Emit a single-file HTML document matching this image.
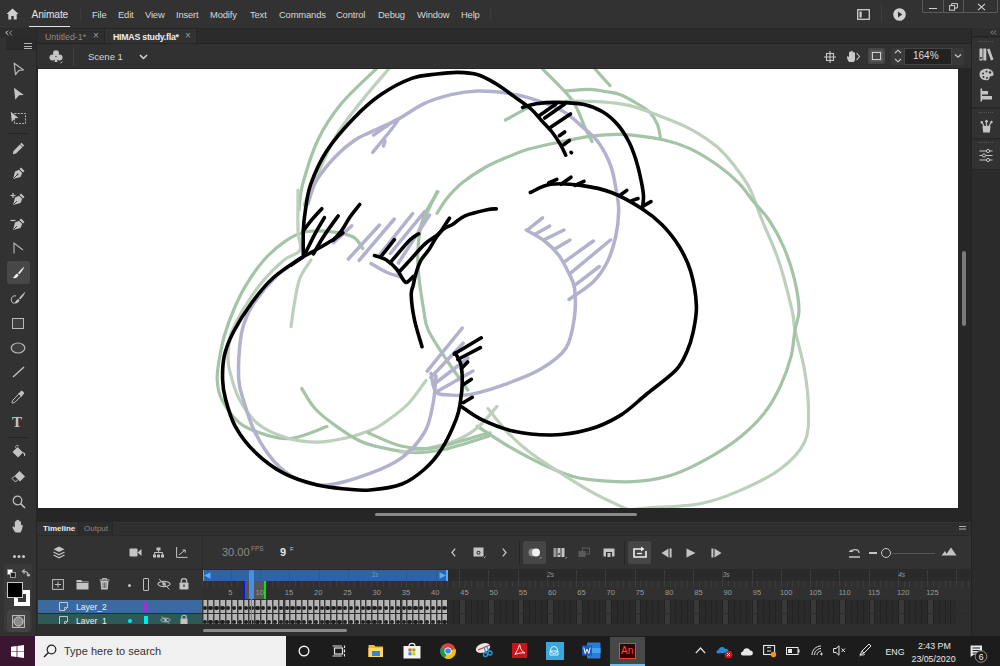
<!DOCTYPE html>
<html><head><meta charset="utf-8">
<style>
*{margin:0;padding:0;box-sizing:border-box}
html,body{width:1000px;height:666px;overflow:hidden;background:#323232;font-family:"Liberation Sans",sans-serif;}
.a{position:absolute}
svg{position:absolute;overflow:visible}
.mi{position:absolute;top:9px;font-size:9.4px;color:#d8d8d8;white-space:nowrap;letter-spacing:-0.15px}
</style></head><body>
<!-- MENUBAR -->
<div class="a" style="left:0;top:0;width:1000px;height:28px;background:#323232">
  <svg style="left:6px;top:8px" width="13" height="12" viewBox="0 0 13 12"><path d="M6.5 0.5 L0.5 6 H2.3 V11.5 H5.3 V8 H7.7 V11.5 H10.7 V6 H12.5 Z" fill="#cfcfcf"/></svg>
  <div class="mi" style="left:31.5px;top:9px;font-size:10.2px;color:#e4e4e4;letter-spacing:-0.1px">Animate</div>
  <div class="a" style="left:29px;top:25.5px;width:41px;height:1.5px;background:#e0e0e0"></div>
  <div class="a" style="left:80px;top:7px;width:1px;height:14px;background:#3c3c3c"></div>
  <div class="mi" style="left:92px">File</div>
  <div class="mi" style="left:118px">Edit</div>
  <div class="mi" style="left:145px">View</div>
  <div class="mi" style="left:176px">Insert</div>
  <div class="mi" style="left:210px">Modify</div>
  <div class="mi" style="left:250px">Text</div>
  <div class="mi" style="left:279px">Commands</div>
  <div class="mi" style="left:336px">Control</div>
  <div class="mi" style="left:378px">Debug</div>
  <div class="mi" style="left:417px">Window</div>
  <div class="mi" style="left:461px">Help</div>
  <div class="a" style="left:490px;top:7px;width:1px;height:14px;background:#3c3c3c"></div>
  <!-- right icons -->
  <svg style="left:857px;top:9px" width="13" height="11" viewBox="0 0 13 11"><rect x="0.7" y="0.7" width="11.6" height="9.6" fill="none" stroke="#cfcfcf" stroke-width="1.3"/><rect x="2.5" y="2.5" width="2.2" height="6" fill="#cfcfcf"/></svg>
  <div class="a" style="left:881px;top:5px;width:1px;height:17px;background:#3e3e3e"></div>
  <svg style="left:893px;top:8px" width="13" height="13" viewBox="0 0 13 13"><circle cx="6.5" cy="6.5" r="6.3" fill="#d2d2d2"/><path d="M5 3.5 L9.3 6.5 L5 9.5Z" fill="#323232"/></svg>
  <div class="a" style="left:922px;top:-1px;width:76px;height:14px;border:1px solid #5a5a5a;border-radius:0 0 2px 2px"></div>
  <div class="a" style="left:943px;top:0px;width:1px;height:13px;background:#5a5a5a"></div>
  <div class="a" style="left:963px;top:0px;width:1px;height:13px;background:#5a5a5a"></div>
  <div class="a" style="left:929px;top:7.5px;width:8px;height:1.5px;background:#d0d0d0"></div>
  <svg style="left:949px;top:3px" width="9" height="8" viewBox="0 0 9 8"><rect x="0.6" y="2.6" width="5" height="4.6" fill="none" stroke="#d0d0d0" stroke-width="1"/><path d="M2.6 2.6 V0.6 H8.4 V5 H5.6" fill="none" stroke="#d0d0d0" stroke-width="1"/></svg>
  <svg style="left:977px;top:3px" width="9" height="8" viewBox="0 0 9 8"><path d="M1 0.8 L8 7.2 M8 0.8 L1 7.2" stroke="#d0d0d0" stroke-width="1.1"/></svg>
</div>
<!-- LEFT TOOLBAR -->
<div class="a" style="left:0;top:28px;width:37px;height:608px;background:#323232;border-right:1px solid #262626">
  <div class="a" style="left:0;top:0;width:36px;height:10px;background:#2c2c2c"></div>
  <div class="a" style="left:5px;top:1px;font-size:7px;color:#9a9a9a;letter-spacing:-1.5px">&#8249;&#8249;</div>
  <div class="a" style="left:6px;top:10px;width:30px;height:12px;background:#2a2a2a;border-bottom:1px solid #262626"></div>
  <div class="a" style="left:24px;top:15px;width:8px;height:1.3px;background:#b4b4b4"></div>
  <div class="a" style="left:24px;top:17.5px;width:8px;height:1.3px;background:#b4b4b4"></div>
  <div class="a" style="left:24px;top:20px;width:8px;height:1.3px;background:#b4b4b4"></div>
  <div class="a" style="left:7px;top:105px;width:22px;height:1px;background:#262626"></div>
  <div class="a" style="left:7px;top:409px;width:22px;height:1px;background:#262626"></div>
</div>
<svg style="left:5px;top:30px" width="8" height="6" viewBox="0 0 8 6"><path d="M3.5 0.5 L1 3 L3.5 5.5 M7 0.5 L4.5 3 L7 5.5" fill="none" stroke="#9a9a9a" stroke-width="1"/></svg>
<!-- subselection -->
<svg style="left:13px;top:62px" width="12" height="14" viewBox="0 0 12 14"><path d="M1.2 1.2 L10.5 8 L6 8.3 L2.5 12.5 Z" fill="none" stroke="#b8b8b8" stroke-width="1.2" stroke-linejoin="round"/></svg>
<!-- selection -->
<svg style="left:13px;top:87px" width="12" height="14" viewBox="0 0 12 14"><path d="M1 0.8 L10.8 8 L6 8.3 L2.3 12.8 Z" fill="#c4c4c4"/></svg>
<!-- free transform -->
<svg style="left:10px;top:111px" width="17" height="15" viewBox="0 0 17 15"><rect x="4.5" y="2.5" width="11" height="10" fill="none" stroke="#b8b8b8" stroke-width="1" stroke-dasharray="2 1.2"/><path d="M0.8 0.8 L8.5 7 L4.8 7.2 L1.8 11 Z" fill="#c4c4c4"/></svg>
<!-- pencil -->
<svg style="left:12px;top:142px" width="13" height="13" viewBox="0 0 13 13"><path d="M9.5 0.8 L12.2 3.5 L4 11.5 L0.8 12.2 L1.5 9 Z" fill="#c4c4c4"/><path d="M8 2.3 L10.7 5" stroke="#323232" stroke-width="0.8"/></svg>
<!-- pen -->
<svg style="left:12px;top:167px" width="13" height="13" viewBox="0 0 13 13"><path d="M9 0.5 L12.5 4 L11 5.5 L7.5 2Z" fill="#c4c4c4"/><path d="M7 2.8 L10.2 6 L8.5 10 L1 12 L3 4.5Z" fill="#c4c4c4"/><path d="M1.5 11.5 L5 8" stroke="#323232" stroke-width="0.9"/><circle cx="5.6" cy="7.4" r="0.9" fill="#323232"/></svg>
<!-- add anchor -->
<svg style="left:10px;top:192px" width="16" height="14" viewBox="0 0 16 14"><path d="M3 1 V6 M0.5 3.5 H5.5" stroke="#c4c4c4" stroke-width="1.2"/><path d="M11 1.5 L14.5 5 L13 6.5 L9.5 3Z" fill="#c4c4c4"/><path d="M9 3.8 L12.2 7 L10.5 11 L3 13 L5 5.5Z" fill="#c4c4c4"/><path d="M3.5 12.5 L7 9" stroke="#323232" stroke-width="0.9"/></svg>
<!-- delete anchor -->
<svg style="left:10px;top:217px" width="16" height="14" viewBox="0 0 16 14"><path d="M0.5 3.5 H5.5" stroke="#c4c4c4" stroke-width="1.2"/><path d="M11 1.5 L14.5 5 L13 6.5 L9.5 3Z" fill="#c4c4c4"/><path d="M9 3.8 L12.2 7 L10.5 11 L3 13 L5 5.5Z" fill="#c4c4c4"/><path d="M3.5 12.5 L7 9" stroke="#323232" stroke-width="0.9"/></svg>
<!-- anchor point -->
<svg style="left:13px;top:242px" width="11" height="12" viewBox="0 0 11 12"><path d="M1 11.5 V1 L10 8" fill="none" stroke="#b8b8b8" stroke-width="1.1"/></svg>
<!-- brush selected -->
<div class="a" style="left:7px;top:261px;width:23px;height:23px;background:#474747;border-radius:3px"></div>
<svg style="left:12px;top:266px" width="13" height="13" viewBox="0 0 13 13"><path d="M12 0.8 C10 2.5 7.5 5 6 7 L7.2 8.2 C9 6.5 11 4 12.2 1Z" fill="#f0f0f0"/><path d="M5.2 7.6 L6.6 9 C6 11.5 3.5 12.5 0.8 12 C2.5 11 2.8 8.5 5.2 7.6Z" fill="#f0f0f0"/></svg>
<!-- art brush -->
<svg style="left:10px;top:291px" width="16" height="15" viewBox="0 0 16 15"><path d="M15 1 C13 2.8 10.5 5.3 9 7.3 L10.2 8.5 C12 6.8 14 4.3 15.2 1.3Z" fill="#c4c4c4"/><path d="M8.2 7.9 L9.6 9.3 C9 11.8 6.5 12.8 4 12.3 C5.5 11.3 5.8 8.8 8.2 7.9Z" fill="#c4c4c4"/><path d="M6 5 C3 4 0.5 7 1.5 10 C2 12 3.5 12.5 4.5 12" fill="none" stroke="#c4c4c4" stroke-width="1"/></svg>
<!-- rect -->
<div class="a" style="left:12px;top:318px;width:12px;height:11px;border:1.2px solid #b8b8b8;background:#3e3e3e"></div>
<!-- oval -->
<svg style="left:10px;top:342px" width="16" height="12" viewBox="0 0 16 12"><ellipse cx="8" cy="6" rx="6.8" ry="5" fill="#3e3e3e" stroke="#b8b8b8" stroke-width="1.2"/></svg>
<!-- line -->
<svg style="left:12px;top:366px" width="13" height="12" viewBox="0 0 13 12"><path d="M1 11 L12 1" stroke="#c4c4c4" stroke-width="1.3"/></svg>
<!-- eyedropper -->
<svg style="left:11px;top:390px" width="14" height="14" viewBox="0 0 14 14"><path d="M10 0.8 C11 0.2 13.5 2.5 13 3.8 L11 5.5 L8.5 3Z" fill="#c4c4c4"/><path d="M8.3 3.5 L10.5 5.7 L4 12.2 C3 13 1 13 1 13 C1 13 1 11 2 10Z" fill="none" stroke="#c4c4c4" stroke-width="1"/><path d="M7.8 3 L11 6.2" stroke="#c4c4c4" stroke-width="1.6"/></svg>
<!-- text -->
<div class="a" style="left:12px;top:414px;font-family:'Liberation Serif',serif;font-size:15px;font-weight:bold;color:#c4c4c4">T</div>
<!-- bucket -->
<svg style="left:11px;top:445px" width="15" height="14" viewBox="0 0 15 14"><path d="M6.5 2 L12 7.5 L7 12.5 L1.5 7Z" fill="#c4c4c4"/><path d="M4.5 2.5 C4.5 0 7 0 7.8 1.2" fill="none" stroke="#c4c4c4" stroke-width="1"/><path d="M12 7.5 C13.5 8 14 9.5 13.5 11" fill="none" stroke="#c4c4c4" stroke-width="1.1"/></svg>
<!-- eraser -->
<svg style="left:11px;top:470px" width="15" height="14" viewBox="0 0 15 14"><path d="M8.5 1 L14 6.5 L9 11.5 L3.5 6Z" fill="#c4c4c4"/><path d="M3.5 6 L1 8.5 L4.5 12 L7 9.5" fill="none" stroke="#c4c4c4" stroke-width="1"/></svg>
<!-- zoom -->
<svg style="left:12px;top:495px" width="14" height="14" viewBox="0 0 14 14"><circle cx="5.5" cy="5.5" r="4.3" fill="none" stroke="#c4c4c4" stroke-width="1.2"/><path d="M8.6 8.6 L13 13" stroke="#c4c4c4" stroke-width="1.5"/></svg>
<!-- hand -->
<svg style="left:12px;top:519px" width="13" height="14" viewBox="0 0 13 14"><path d="M3.5 13.5 C2 11.5 0.3 9 0.5 8 C1 7.2 2 7.5 2.8 8.5 V3 C2.8 2 4.2 2 4.2 3 V6 V1.5 C4.2 0.5 5.8 0.5 5.8 1.5 V6 V1.8 C5.8 0.8 7.4 0.8 7.4 1.8 V6.2 V3 C7.4 2 9 2 9 3 V6.5 C9.2 5.8 10.5 5.5 10.8 6.5 C10.5 9 9.5 12 8.5 13.5Z" fill="#c4c4c4"/></svg>
<!-- dots -->
<div class="a" style="left:13px;top:555px;width:3px;height:3px;border-radius:50%;background:#c8c8c8;box-shadow:4.5px 0 0 #c8c8c8,9px 0 0 #c8c8c8"></div>
<!-- color panel -->
<div class="a" style="left:4px;top:564px;width:28px;height:68px;background:#393939;border-radius:3px"></div>
<svg style="left:7px;top:569px" width="9" height="9" viewBox="0 0 9 9"><rect x="0.5" y="0.5" width="5" height="5" fill="#fff" stroke="#888" stroke-width="0.8"/><rect x="3.5" y="3.5" width="5" height="5" fill="#222" stroke="#bbb" stroke-width="0.8"/></svg>
<svg style="left:21px;top:569px" width="9" height="10" viewBox="0 0 9 10"><path d="M1 3 L3 1 L3 2.5 C6 2.5 7.5 4 7.5 7 M7.5 7 L5.8 5.5 M7.5 7 L9 5.5 M3 1 V5" fill="none" stroke="#c4c4c4" stroke-width="1.1"/></svg>
<div class="a" style="left:14px;top:590px;width:16px;height:16px;background:#fff"></div>
<div class="a" style="left:18px;top:594px;width:8px;height:8px;background:#393939"></div>
<div class="a" style="left:7px;top:582px;width:16px;height:16px;background:#000;border:1px solid #c8c8c8"></div>
<div class="a" style="left:7px;top:610px;width:23px;height:22px;background:#434343;border-radius:3px"></div>
<svg style="left:12px;top:615px" width="13" height="13" viewBox="0 0 13 13"><rect x="0.6" y="0.6" width="11.8" height="11.8" fill="none" stroke="#c8c8c8" stroke-width="1"/><circle cx="6.5" cy="6.5" r="4.6" fill="#8a8a8a" stroke="#d0d0d0" stroke-width="1"/></svg>

<!-- TAB BAR -->
<div class="a" style="left:37px;top:28px;width:935px;height:16px;background:#2b2b2b;border-top:1px solid #272727;border-bottom:1px solid #242424">
  <div class="a" style="left:1px;top:0;width:67px;height:14px;background:#2e2e2e;border-right:1px solid #262626"></div>
  <div class="a" style="left:68px;top:0;width:92px;height:14px;background:#323232;border-right:1px solid #262626"></div>
  <div class="a" style="left:8px;top:2.5px;font-size:8.8px;color:#8c8c8c;white-space:nowrap">Untitled-1*</div>
  <div class="a" style="left:56px;top:1px;font-size:10px;color:#9a9a9a">&#215;</div>
  <div class="a" style="left:76px;top:2.5px;font-size:8.8px;color:#ececec;font-weight:bold;white-space:nowrap;letter-spacing:-0.25px">HIMAS study.fla*</div>
  <div class="a" style="left:148px;top:1px;font-size:10px;color:#9a9a9a">&#215;</div>
</div>
<!-- SCENE BAR -->
<div class="a" style="left:37px;top:44px;width:935px;height:25px;background:#313131;border-bottom:1px solid #2a2a2a">
  <svg style="left:12px;top:6px" width="15" height="14" viewBox="0 0 15 14"><circle cx="7" cy="3.3" r="3" fill="#c4c4c4"/><circle cx="3.5" cy="7.5" r="3" fill="#c4c4c4"/><circle cx="10.5" cy="7.5" r="3" fill="#c4c4c4"/><path d="M6.2 7 L7.8 7 L8.5 12 L5.5 12Z" fill="#c4c4c4"/><path d="M11.5 13.2 L13.5 11.5" stroke="#c4c4c4" stroke-width="1"/></svg>
  <div class="a" style="left:36px;top:3px;width:1px;height:19px;background:#3e3e3e"></div>
  <div class="a" style="left:51px;top:6.5px;font-size:9.5px;color:#d6d6d6;white-space:nowrap">Scene 1</div>
  <svg style="left:102px;top:10px" width="9" height="6" viewBox="0 0 9 6"><path d="M1 1 L4.5 4.5 L8 1" fill="none" stroke="#d6d6d6" stroke-width="1.5"/></svg>
  <!-- right controls -->
  <svg style="left:787px;top:7px" width="12" height="12" viewBox="0 0 12 12"><rect x="2.5" y="2.5" width="7" height="7" fill="none" stroke="#c8c8c8" stroke-width="1.1"/><path d="M6 0 V12 M0 6 H12" stroke="#c8c8c8" stroke-width="1.1"/></svg>
  <svg style="left:809px;top:6px" width="15" height="13" viewBox="0 0 15 13"><path d="M3 12 C1 9 0.5 7 1.5 6 L3 7 V2.5 C3 1.5 4.5 1.5 4.5 2.5 V1.5 C4.5 0.5 6 0.5 6 1.5 V2 C6 1 7.5 1 7.5 2 V3 C7.5 2 9 2 9 3 V9 C9 11 8 12 7.5 12Z" fill="#c8c8c8"/><path d="M10.5 3 L13.5 6.5 L10.5 10" fill="none" stroke="#c8c8c8" stroke-width="1.1"/></svg>
  <div class="a" style="left:831px;top:4px;width:17px;height:16px;background:#464646;border-radius:2px"></div>
  <div class="a" style="left:835px;top:8px;width:9px;height:8px;border:1.5px solid #cfcfcf;box-shadow:0 0 0 1.5px #5e5e5e"></div>
  <div class="a" style="left:854px;top:3.5px;width:73px;height:17.5px;background:#393939;border-radius:2px"></div>
  <svg style="left:857px;top:5px" width="8" height="14" viewBox="0 0 8 14"><path d="M1 4 L4 1.2 L7 4 M1 10 L4 12.8 L7 10" fill="none" stroke="#c8c8c8" stroke-width="1.1"/></svg>
  <div class="a" style="left:866.5px;top:3.5px;width:48px;height:17px;background:#222;border:1px solid #444"></div>
  <div class="a" style="left:876px;top:6px;font-size:10px;color:#dedede;white-space:nowrap">164%</div>
  <svg style="left:917px;top:9px" width="8" height="6" viewBox="0 0 8 6"><path d="M1 1.5 L4 4.2 L7 1.5" fill="none" stroke="#c8c8c8" stroke-width="1.2"/></svg>
</div>
<!-- PASTEBOARD -->
<div class="a" style="left:37px;top:68px;width:935px;height:454px;background:#262626"></div>
<div class="a" style="left:38px;top:69px;width:920px;height:439px;background:#fff;overflow:hidden"><svg width="920" height="440" viewBox="0 0 920 440" style="position:absolute;left:0;top:-1px" fill="none" stroke-linecap="round" stroke-linejoin="round"><path d="M261.0 142.0 C261.6 137.7 261.5 127.7 264.7 116.0 C267.9 104.3 273.6 85.1 280.0 71.7 C286.4 58.3 293.8 47.3 303.4 35.6 C313.0 23.9 331.3 7.7 337.7 1.4 C344.1 -4.9 341.3 -1.4 342.0 -2.0" stroke="#a4c4a6" stroke-width="3.2"/><path d="M266.0 137.0 C268.2 132.1 273.7 119.2 279.0 107.7 C284.3 96.2 290.9 80.0 298.0 68.0 C305.1 56.0 312.8 46.7 321.5 35.6 C330.2 24.5 344.9 7.7 350.3 1.4 C355.7 -4.9 353.4 -1.4 354.0 -2.0" stroke="#bdd0bd" stroke-width="3.2"/><path d="M502.0 -2.0 C502.5 -1.4 499.7 -4.3 505.0 1.4 C510.3 7.1 527.0 22.4 534.0 32.0 C541.0 41.6 543.4 52.1 546.7 59.0 C550.0 65.9 552.8 71.1 554.0 73.5" stroke="#a4c4a6" stroke-width="3.2"/><path d="M555.0 -2.0 C555.4 -1.4 554.7 -1.9 557.5 1.4 C560.3 4.7 569.6 14.9 572.0 17.6" stroke="#a4c4a6" stroke-width="3.2"/><path d="M527.0 23.0 C531.2 22.7 545.3 21.2 552.0 21.3 C558.7 21.4 562.0 22.6 567.0 23.5 C572.0 24.4 576.2 24.2 582.0 26.5 C587.8 28.8 596.5 34.0 601.5 37.0 C606.5 40.0 609.0 41.2 612.0 44.5 C615.0 47.8 617.8 52.3 619.5 56.6 C621.2 60.8 622.0 67.8 622.5 70.0" stroke="#a4c4a6" stroke-width="3.2"/><path d="M528.0 33.0 C534.0 33.1 553.5 33.1 564.0 33.8 C574.5 34.5 582.0 35.3 591.0 37.4 C600.0 39.5 607.8 42.6 618.0 46.5 C628.2 50.4 641.8 55.4 652.0 60.8 C662.2 66.2 671.5 72.5 679.0 78.8 C686.5 85.1 691.6 91.7 697.0 98.6 C702.4 105.5 707.0 111.1 711.5 120.0 C716.0 128.9 719.1 139.9 724.0 152.0 C728.9 164.1 735.6 177.5 740.6 192.5 C745.6 207.5 751.3 230.4 754.0 242.0 C756.7 253.6 754.9 252.0 757.0 262.0 C759.1 272.0 764.2 288.7 766.5 302.0 C768.8 315.3 770.5 329.9 770.5 342.0 C770.5 354.1 771.2 364.5 766.5 374.3 C761.8 384.1 753.1 393.0 742.4 401.0 C731.7 409.0 715.7 416.6 702.3 422.4 C688.9 428.2 677.6 432.9 662.0 435.8 C646.4 438.7 620.4 439.0 608.7 440.0 C597.0 441.0 594.8 441.7 592.0 442.0" stroke="#bdd0bd" stroke-width="3.2"/><path d="M399.0 145.3 C400.8 142.7 405.2 134.7 409.5 129.6 C413.8 124.5 418.2 119.5 424.5 114.5 C430.8 109.5 439.5 103.8 447.0 99.5 C454.5 95.2 462.1 92.1 469.6 89.0 C477.1 85.9 482.8 83.4 492.0 80.8 C501.2 78.2 514.6 75.6 524.6 73.5 C534.6 71.4 542.1 69.5 552.0 68.3 C561.9 67.1 571.7 65.8 584.0 66.4 C596.3 67.0 614.7 69.6 626.0 72.0 C637.3 74.4 643.2 76.5 652.0 80.6 C660.8 84.7 670.9 91.1 679.0 96.8 C687.1 102.5 694.6 108.8 700.6 114.8 C706.6 120.8 709.9 126.8 715.0 133.0 C720.1 139.2 725.9 144.3 731.0 152.0 C736.1 159.7 741.5 169.1 745.7 179.0 C750.0 188.9 754.0 200.9 756.5 211.4 C759.0 221.9 760.9 233.6 761.0 242.0 C761.1 250.4 758.3 254.2 757.0 262.0 C755.7 269.8 755.4 279.4 753.0 288.7 C750.6 298.0 746.8 308.6 742.4 318.0 C738.0 327.4 733.1 336.5 726.4 345.0 C719.7 353.5 711.7 361.4 702.3 369.0 C692.9 376.6 681.1 384.1 670.0 390.3 C658.9 396.5 646.8 402.6 635.5 406.4 C624.2 410.2 613.1 412.1 602.0 413.2 C590.9 414.3 580.0 413.9 569.0 413.2 C558.0 412.5 547.0 411.7 536.0 408.8 C525.0 405.9 514.0 400.7 503.0 395.6 C492.0 390.5 480.6 384.2 470.0 378.0 C459.4 371.8 444.3 361.5 439.2 358.2" stroke="#a4c4a6" stroke-width="3.2"/><path d="M467.4 52.0 L490.8 39.2" stroke="#a4c4a6" stroke-width="3.2"/><path d="M381.0 162.0 L399.0 123.6" stroke="#a4c4a6" stroke-width="3.2"/><path d="M324.8 180.6 C323.2 178.7 320.4 171.8 315.3 169.0 C310.2 166.2 302.2 164.7 294.3 163.8 C286.4 162.9 275.9 162.2 268.0 163.8 C260.1 165.4 254.0 168.6 247.0 173.3 C240.0 178.0 232.5 184.7 226.0 192.0 C219.5 199.3 213.1 208.8 208.0 217.2 C202.9 225.6 199.0 234.1 195.4 242.5 C191.8 250.9 188.8 259.3 186.4 267.7 C184.0 276.1 182.2 285.6 181.0 293.0 C179.8 300.4 178.8 305.6 179.2 312.0 C179.6 318.4 180.0 324.2 183.7 331.3 C187.4 338.4 194.2 348.9 201.3 354.7 C208.5 360.5 217.8 363.8 226.6 366.4 C235.4 369.0 243.6 371.6 254.0 370.3 C264.4 369.0 283.2 360.6 289.0 358.6" stroke="#a4c4a6" stroke-width="3.2"/><path d="M260.0 122.0 C260.0 128.8 259.7 152.6 260.0 162.6 C260.3 172.6 264.3 177.1 262.0 182.0 C259.7 186.9 252.0 187.0 246.0 192.0 C240.0 197.0 232.3 204.3 226.0 211.8 C219.7 219.3 213.4 228.3 208.0 237.0 C202.6 245.7 196.6 255.6 193.6 264.0 C190.6 272.4 190.3 281.2 190.0 287.5 C189.7 293.8 189.6 294.7 191.5 302.0 C193.4 309.3 196.4 322.2 201.3 331.3 C206.2 340.4 212.7 350.1 220.8 356.6 C228.9 363.1 240.2 367.4 250.0 370.3 C259.8 373.2 269.6 374.2 279.3 374.2 C289.0 374.1 299.2 371.9 308.0 370.0 C316.8 368.1 325.9 364.8 332.0 362.5 C338.1 360.2 338.3 360.4 344.6 356.0 C350.9 351.6 362.8 343.3 370.0 336.0 C377.2 328.7 385.0 316.3 388.0 312.4" stroke="#bdd0bd" stroke-width="3.2"/><path d="M273.0 192.0 C271.2 195.0 264.7 203.1 262.0 210.0 C259.3 216.9 258.2 225.3 256.7 233.4 C255.2 241.5 253.6 254.5 253.0 258.7" stroke="#bdd0bd" stroke-width="3.2"/><path d="M263.7 320.5 C266.0 323.9 271.5 334.6 277.4 341.0 C283.2 347.4 291.4 353.3 298.8 358.6 C306.2 363.9 315.0 369.6 322.0 373.0 C329.0 376.4 332.3 377.1 341.0 379.0 C349.7 380.9 363.0 384.1 374.0 384.5 C385.0 384.9 394.2 383.9 407.0 381.2 C419.8 378.4 443.7 370.2 451.0 368.0" stroke="#a4c4a6" stroke-width="3.2"/><path d="M459.0 338.4 C455.8 341.9 446.8 353.5 440.0 359.2 C433.2 364.9 427.2 368.7 418.0 372.4 C408.8 376.1 394.3 379.3 385.0 381.2 C375.7 383.1 365.8 383.5 362.0 384.0" stroke="#bdd0bd" stroke-width="3.2"/><path d="M330.0 364.7 C335.5 366.9 352.0 375.4 363.0 378.0 C374.0 380.6 383.2 381.7 396.0 380.0 C408.8 378.3 430.7 370.5 440.0 368.0 C449.3 365.5 450.0 365.5 452.0 365.0" stroke="#a4c4a6" stroke-width="3.2"/><path d="M400.0 123.8 C397.6 128.0 389.0 140.3 385.7 149.0 C382.4 157.7 381.2 167.0 380.3 176.0 C379.4 185.0 379.4 192.0 380.3 203.0 C381.2 214.0 384.0 232.1 385.7 242.0 C387.4 251.9 386.3 253.7 390.4 262.4 C394.4 271.1 403.4 284.1 410.0 294.0 C416.6 303.9 426.5 317.3 429.8 322.0" stroke="#a4c4a6" stroke-width="3.2"/><path d="M450.0 340.6 C453.3 344.6 463.0 357.5 470.0 364.8 C477.0 372.1 482.8 377.6 492.0 384.6 C501.2 391.6 514.0 399.6 525.0 406.6 C536.0 413.6 547.0 420.5 558.0 426.4 C569.0 432.3 585.5 439.4 591.0 442.0" stroke="#bdd0bd" stroke-width="3.2"/><path d="M270.0 136.0 C271.4 132.2 273.5 121.0 278.2 113.0 C282.9 105.0 291.5 94.8 298.0 88.0 C304.5 81.2 311.3 75.9 317.0 72.0 C322.7 68.1 325.0 67.8 332.0 64.4 C339.0 61.0 350.0 56.6 359.0 51.8 C368.0 47.0 377.0 39.8 386.0 35.6 C395.0 31.4 404.0 28.7 413.0 26.6 C422.0 24.5 431.0 23.3 440.0 23.0 C449.0 22.7 458.3 23.6 467.0 24.8 C475.7 26.0 482.4 27.2 492.0 30.2 C501.6 33.2 515.7 38.0 524.6 43.0 C533.5 48.0 539.5 54.5 545.6 59.9 C551.7 65.3 556.4 68.8 561.0 75.3 C565.6 81.8 570.1 90.6 573.0 98.7 C575.9 106.8 577.2 116.7 578.5 124.0 C579.8 131.3 580.9 135.2 580.7 142.7 C580.6 150.2 579.5 160.6 577.6 169.0 C575.7 177.4 573.2 185.9 569.5 193.4 C565.8 200.8 561.7 207.3 555.3 213.7 C548.9 220.0 535.0 228.5 531.0 231.5" stroke="#b2b2cf" stroke-width="3.5"/><path d="M335.6 67.0 C339.7 64.5 360.1 48.9 360.0 51.8 C359.9 54.7 338.9 78.9 334.7 84.3" stroke="#b2b2cf" stroke-width="3.5"/><path d="M345.5 78.0 L347.0 73.0" stroke="#b2b2cf" stroke-width="3.5"/><path d="M488.4 162.0 C491.4 163.8 501.2 168.8 506.6 173.0 C512.0 177.2 516.7 181.9 520.8 187.3 C524.9 192.7 528.4 200.2 531.0 205.6 C533.6 211.1 535.6 212.9 536.5 220.0 C537.4 227.1 537.9 238.4 536.5 248.4 C535.1 258.4 533.6 271.2 528.0 280.0 C522.4 288.8 513.1 294.9 502.8 301.0 C492.5 307.1 478.0 312.4 466.3 316.6 C454.6 320.8 441.7 324.7 432.6 326.4 C423.6 328.1 417.8 327.4 412.0 327.0 C406.2 326.6 401.2 327.6 398.0 324.0 C394.8 320.4 393.8 308.5 393.0 305.4" stroke="#b2b2cf" stroke-width="3.5"/><path d="M489.4 162.0 L504.6 149.8" stroke="#b2b2cf" stroke-width="3.5"/><path d="M497.5 166.0 L511.7 158.0" stroke="#b2b2cf" stroke-width="3.5"/><path d="M505.6 172.0 L526.0 162.0" stroke="#b2b2cf" stroke-width="3.5"/><path d="M516.8 181.0 L532.0 172.0" stroke="#b2b2cf" stroke-width="3.5"/><path d="M527.0 193.4 L555.3 173.0" stroke="#b2b2cf" stroke-width="3.5"/><path d="M532.0 205.6 L572.5 172.0" stroke="#b2b2cf" stroke-width="3.5"/><path d="M536.0 217.8 L561.4 198.5" stroke="#b2b2cf" stroke-width="3.5"/><path d="M262.0 190.0 C258.3 192.8 247.1 199.8 239.6 207.0 C232.1 214.2 222.6 225.4 217.0 233.4 C211.4 241.4 208.8 247.5 206.2 255.0 C203.6 262.5 202.6 269.0 201.7 278.5 C200.8 288.0 200.2 303.2 200.8 312.0 C201.4 320.8 202.5 322.6 205.2 331.3 C207.9 340.0 211.8 354.0 217.0 364.4 C222.2 374.8 229.3 385.9 236.4 393.7 C243.5 401.5 251.0 407.4 259.8 411.3 C268.6 415.2 277.0 418.0 289.0 417.0 C301.0 416.0 319.5 410.0 332.0 405.4 C344.5 400.8 354.9 396.5 364.0 389.6 C373.1 382.7 381.5 372.9 386.7 364.0 C391.9 355.1 393.1 345.3 395.0 336.0 C396.9 326.7 397.5 312.7 398.0 308.0" stroke="#b2b2cf" stroke-width="3.5"/><path d="M310.4 191.0 L341.5 157.0" stroke="#b2b2cf" stroke-width="3.5"/><path d="M321.2 192.3 L356.3 151.0" stroke="#b2b2cf" stroke-width="3.5"/><path d="M341.5 187.0 L374.6 145.6" stroke="#b2b2cf" stroke-width="3.5"/><path d="M352.3 185.5 L386.7 143.6" stroke="#b2b2cf" stroke-width="3.5"/><path d="M360.4 195.0 L391.5 147.0" stroke="#b2b2cf" stroke-width="3.5"/><path d="M295.5 174.7 L313.8 157.8" stroke="#b2b2cf" stroke-width="3.5"/><path d="M333.0 195.5 C335.5 196.9 343.0 201.8 348.0 204.0 C353.0 206.2 360.5 208.2 363.0 209.0" stroke="#b2b2cf" stroke-width="3.5"/><path d="M389.2 303.2 L424.3 260.0" stroke="#b2b2cf" stroke-width="3.5"/><path d="M392.8 309.5 L425.2 275.2" stroke="#b2b2cf" stroke-width="3.5"/><path d="M395.0 317.0 L430.0 290.0" stroke="#b2b2cf" stroke-width="3.5"/><path d="M398.2 324.0 L435.0 303.0" stroke="#b2b2cf" stroke-width="3.5"/><path d="M265.3 187.0 C265.3 182.9 265.0 170.0 265.3 162.6 C265.6 155.2 266.1 150.1 267.4 142.3 C268.6 134.5 269.2 126.0 272.8 116.0 C276.4 106.0 281.8 93.5 289.0 82.5 C296.2 71.5 307.0 59.3 316.0 50.0 C325.0 40.7 333.4 33.2 343.0 26.6 C352.6 20.0 364.4 13.8 373.7 10.4 C383.0 7.0 391.3 7.0 399.0 6.0 C406.7 5.0 413.2 4.3 420.0 4.4 C426.8 4.5 433.7 4.9 440.0 6.8 C446.3 8.7 452.0 12.2 458.0 15.8 C464.0 19.4 470.2 24.2 476.0 28.4 C481.8 32.6 488.4 37.0 493.0 41.0 C497.6 45.0 500.0 48.7 503.5 52.5 C507.0 56.3 510.8 60.0 514.0 64.0 C517.2 68.0 520.2 72.8 522.5 76.7 C524.8 80.6 526.8 85.4 527.7 87.2" stroke="#000" stroke-width="3.6"/><path d="M484.6 39.4 C486.9 38.8 492.6 36.5 498.3 35.7 C504.0 34.9 511.1 34.3 519.0 34.4 C527.0 34.5 538.3 34.9 546.0 36.5 C553.7 38.1 559.3 40.6 565.0 44.0 C570.7 47.4 575.7 52.0 580.0 57.0 C584.3 62.0 588.0 68.2 591.0 74.0 C594.0 79.8 596.0 85.7 598.0 92.0 C600.0 98.3 601.8 106.0 603.0 112.0 C604.2 118.0 605.3 123.2 605.5 128.0 C605.7 132.8 604.6 138.5 604.4 140.6" stroke="#000" stroke-width="3.6"/><path d="M500.4 48.3 L518.0 36.0" stroke="#000" stroke-width="3.6"/><path d="M506.7 50.0 L526.7 36.0" stroke="#000" stroke-width="3.6"/><path d="M513.0 59.0 L532.5 46.0" stroke="#000" stroke-width="3.6"/><path d="M521.4 67.7 L526.7 64.0" stroke="#000" stroke-width="3.6"/><path d="M525.6 76.7 L531.4 72.5" stroke="#000" stroke-width="3.6"/><path d="M533.0 84.3 L533.5 84.8" stroke="#000" stroke-width="3.6"/><path d="M492.4 124.5 C495.8 123.1 504.3 117.5 512.7 116.3 C521.1 115.1 532.9 116.0 543.0 117.4 C553.1 118.8 563.3 120.6 573.5 124.5 C583.7 128.4 595.5 135.3 604.0 140.7 C612.5 146.1 618.0 150.6 624.3 157.0 C630.5 163.4 636.8 171.2 641.5 179.0 C646.2 186.8 650.0 194.0 652.8 203.8 C655.6 213.6 658.0 227.5 658.4 237.6 C658.8 247.7 656.6 257.0 655.0 264.6 C653.4 272.2 651.8 277.2 649.0 283.4 C646.2 289.6 644.7 294.9 638.0 302.0 C631.3 309.1 618.0 318.4 608.7 326.0 C599.4 333.6 591.7 341.7 582.0 347.6 C572.3 353.5 561.8 358.4 550.5 361.6 C539.2 364.8 526.6 366.8 514.0 367.0 C501.4 367.2 486.4 365.6 474.7 363.0 C463.0 360.4 452.2 355.7 443.8 351.7 C435.4 347.7 427.3 341.1 424.0 339.0" stroke="#000" stroke-width="3.6"/><path d="M510.7 115.0 L518.8 111.3" stroke="#000" stroke-width="3.6"/><path d="M523.0 116.3 L533.0 109.2" stroke="#000" stroke-width="3.6"/><path d="M537.0 117.4 L546.0 113.3" stroke="#000" stroke-width="3.6"/><path d="M581.7 127.5 L588.8 122.4" stroke="#000" stroke-width="3.6"/><path d="M593.8 132.6 L600.0 130.5" stroke="#000" stroke-width="3.6"/><path d="M604.0 138.6 L613.0 133.6" stroke="#000" stroke-width="3.6"/><path d="M253.3 197.0 C255.2 195.7 261.0 191.4 264.9 189.0 C268.8 186.6 271.5 185.5 276.4 182.7 C281.3 179.9 289.6 175.2 294.3 172.2 C299.0 169.2 303.1 166.1 304.8 164.9" stroke="#000" stroke-width="3.6"/><path d="M265.4 162.8 C266.9 160.9 271.2 154.9 274.3 151.2 C277.4 147.5 282.2 142.4 283.8 140.7" stroke="#000" stroke-width="3.6"/><path d="M268.0 183.8 C269.6 180.7 274.4 170.6 277.5 164.9 C280.6 159.2 284.9 152.2 286.4 149.6" stroke="#000" stroke-width="3.6"/><path d="M275.4 185.9 C277.1 182.9 281.8 174.3 285.9 168.0 C290.0 161.7 297.7 151.3 300.1 148.0" stroke="#000" stroke-width="3.6"/><path d="M295.4 172.2 C296.8 170.5 301.2 165.9 304.0 162.0 C306.8 158.1 309.1 153.2 312.0 149.0 C314.9 144.8 320.1 138.6 321.7 136.5" stroke="#000" stroke-width="3.6"/><path d="M264.9 189.0 C259.9 192.5 243.6 202.3 235.0 210.0 C226.4 217.7 220.0 226.2 213.4 235.2 C206.8 244.2 199.9 255.3 195.4 264.0 C190.9 272.7 188.2 279.5 186.4 287.5 C184.6 295.5 184.4 304.7 184.6 312.0 C184.8 319.3 185.5 323.5 187.6 331.3 C189.7 339.1 192.5 349.8 197.4 358.6 C202.3 367.4 208.8 376.2 216.9 384.0 C225.0 391.8 235.6 399.9 246.0 405.4 C256.4 410.9 268.9 414.4 279.3 417.0 C289.7 419.6 299.8 420.2 308.6 421.0 C317.4 421.8 322.8 422.8 332.0 422.0 C341.2 421.2 354.9 419.5 364.0 416.0 C373.1 412.5 380.1 406.8 386.7 401.0 C393.3 395.2 398.3 389.4 403.6 381.0 C408.9 372.6 415.4 358.3 418.5 350.3 C421.6 342.3 421.5 339.2 422.5 333.0 C423.5 326.8 424.3 319.3 424.3 313.0 C424.3 306.7 423.7 299.7 422.5 295.0 C421.3 290.3 417.9 286.7 417.0 285.0" stroke="#000" stroke-width="3.6"/><path d="M416.2 286.0 L443.3 269.8" stroke="#000" stroke-width="3.6"/><path d="M419.8 291.5 L442.4 279.7" stroke="#000" stroke-width="3.6"/><path d="M423.4 300.5 L429.7 294.0" stroke="#000" stroke-width="3.6"/><path d="M425.2 316.7 L433.4 311.3" stroke="#000" stroke-width="3.6"/><path d="M425.2 334.7 L434.3 329.3" stroke="#000" stroke-width="3.6"/><path d="M336.5 187.5 C338.4 188.2 344.3 189.4 348.0 191.7 C351.7 193.9 355.5 197.5 358.5 201.0 C361.5 204.5 364.1 210.5 365.9 212.7 C367.6 214.9 367.4 214.9 369.0 214.2 C370.6 213.5 374.2 209.4 375.3 208.5" stroke="#000" stroke-width="3.6"/><path d="M343.8 187.5 L356.4 171.7" stroke="#000" stroke-width="3.6"/><path d="M352.2 194.8 C355.4 191.1 366.4 177.6 371.1 172.8 C375.8 168.0 379.0 167.1 380.6 165.9" stroke="#000" stroke-width="3.6"/><path d="M361.7 203.2 C363.8 201.0 369.8 194.6 374.0 190.0 C378.2 185.4 382.6 179.9 387.0 175.9 C391.4 171.9 397.4 168.9 400.7 165.8 C404.0 162.7 404.9 160.0 406.7 157.4 C408.5 154.8 410.7 151.4 411.5 150.2" stroke="#000" stroke-width="3.6"/><path d="M384.0 278.7 C382.8 274.2 378.3 260.6 376.5 252.0 C374.7 243.4 373.4 232.8 373.2 227.0 C373.0 221.2 374.6 220.3 375.3 217.0 C376.0 213.7 376.2 211.4 377.4 207.4 C378.6 203.3 380.4 197.0 382.7 192.7 C385.0 188.4 388.4 185.4 391.0 181.5 C393.6 177.6 395.8 172.9 398.2 169.5 C400.6 166.1 402.7 163.2 405.5 161.0 C408.3 158.8 411.4 158.4 415.0 156.2 C418.6 154.0 421.3 150.2 427.0 147.8 C432.7 145.4 444.1 142.8 449.3 141.7 C454.5 140.5 456.8 141.0 458.3 140.9" stroke="#000" stroke-width="3.6"/></svg></div>
<div class="a" style="left:962px;top:251px;width:4px;height:75px;background:#7a7a7a;border-radius:2px"></div>
<div class="a" style="left:375px;top:513px;width:262px;height:2.5px;background:#8a8a8a;border-radius:2px"></div>
<!-- RIGHT PANEL -->
<div class="a" style="left:971px;top:28px;width:29px;height:608px;background:#2b2b2b;border-left:1px solid #222"></div>
<div class="a" style="left:972px;top:28px;width:28px;height:9px;background:#2e2e2e;border-bottom:1px solid #232323"></div>
<svg style="left:990px;top:30px" width="7" height="5" viewBox="0 0 7 5"><path d="M3 0.5 L1 2.5 L3 4.5 M6 0.5 L4 2.5 L6 4.5" fill="none" stroke="#9a9a9a" stroke-width="0.9"/></svg>
<div class="a" style="left:972px;top:38px;width:28px;height:70px;background:#323232;border-bottom:1px solid #262626"></div>
<div class="a" style="left:972px;top:109px;width:28px;height:30px;background:#323232;border-bottom:1px solid #262626"></div>
<div class="a" style="left:972px;top:140px;width:28px;height:30px;background:#323232;border-bottom:1px solid #262626"></div>
<div class="a" style="left:979px;top:41px;width:14px;height:1px;border-top:1px dotted #555"></div>
<div class="a" style="left:979px;top:112px;width:14px;height:1px;border-top:1px dotted #555"></div>
<div class="a" style="left:979px;top:142px;width:14px;height:1px;border-top:1px dotted #555"></div>
<!-- library -->
<svg style="left:979px;top:48px" width="15" height="13" viewBox="0 0 15 13"><rect x="0.5" y="0.5" width="3" height="12" fill="#c4c4c4"/><rect x="4.3" y="0.5" width="3" height="12" fill="#c4c4c4"/><path d="M8 1.5 L10.5 0.5 L14.5 11.5 L12 12.5Z" fill="#c4c4c4"/><rect x="1.2" y="9" width="1.6" height="2" fill="#323232"/></svg>
<!-- palette -->
<svg style="left:979px;top:68px" width="15" height="13" viewBox="0 0 15 13"><path d="M7.5 0.8 C12 0.8 14.5 3.5 14.5 6 C14.5 8.5 12 8 11 8.5 C10 9 11.5 12 8 12.2 C3 12.5 0.5 9.5 0.5 6.5 C0.5 3 3.5 0.8 7.5 0.8Z" fill="#c4c4c4"/><circle cx="4" cy="5.5" r="1" fill="#323232"/><circle cx="4.5" cy="9" r="1" fill="#323232"/><circle cx="8" cy="10" r="1" fill="#323232"/><circle cx="11" cy="4.5" r="1.2" fill="#323232"/><circle cx="7.5" cy="3.5" r="1" fill="#323232"/></svg>
<!-- align -->
<svg style="left:980px;top:88px" width="13" height="14" viewBox="0 0 13 14"><rect x="0.5" y="0.5" width="1.6" height="13" fill="#c4c4c4"/><rect x="2" y="3" width="6" height="3.5" fill="#c4c4c4"/><rect x="2" y="8" width="10" height="3.5" fill="#c4c4c4"/></svg>
<!-- brushes -->
<svg style="left:980px;top:119px" width="13" height="14" viewBox="0 0 13 14"><path d="M2.5 7 H10.5 L9.8 13.5 H3.2Z" fill="#c4c4c4"/><path d="M6.5 7 V1 M6.5 1 L5.3 3 M6.5 1 L7.7 3 M4 7 L2 3.5 M9 7 L11.5 3" stroke="#c4c4c4" stroke-width="1.2" fill="none"/><circle cx="1.8" cy="3.3" r="1.2" fill="#c4c4c4"/><circle cx="11.5" cy="3" r="1.2" fill="#c4c4c4"/></svg>
<!-- sliders -->
<svg style="left:979px;top:149px" width="14" height="13" viewBox="0 0 14 13"><path d="M0.5 2 H13.5 M0.5 6.5 H13.5 M0.5 11 H13.5" stroke="#c4c4c4" stroke-width="1"/><circle cx="9" cy="2" r="1.6" fill="#323232" stroke="#c4c4c4" stroke-width="1"/><circle cx="5" cy="6.5" r="1.6" fill="#323232" stroke="#c4c4c4" stroke-width="1"/><circle cx="9" cy="11" r="1.6" fill="#323232" stroke="#c4c4c4" stroke-width="1"/></svg>

<!-- TIMELINE -->
<div class="a" style="left:37px;top:522px;width:934px;height:114px;background:#2e2e2e"></div>
<div class="a" style="left:37px;top:521.5px;width:934px;height:13.5px;background:#2f2f2f;border-top:1px solid #353535"></div>
<div class="a" style="left:38px;top:522px;width:40px;height:13px;background:#323232"></div>
<div class="a" style="left:78px;top:522px;width:35px;height:13px;background:#2c2c2c;border-left:1px solid #262626;border-right:1px solid #262626"></div>
<div class="a" style="left:43px;top:524px;font-size:8px;font-weight:bold;color:#ececec;white-space:nowrap">Timeline</div>
<div class="a" style="left:84px;top:524px;font-size:8px;color:#8a8a8a;white-space:nowrap">Output</div>
<div class="a" style="left:959px;top:526px;width:7px;height:1.3px;background:#b0b0b0;box-shadow:0 2.5px 0 #b0b0b0"></div>
<div class="a" style="left:38px;top:535px;width:933px;height:34px;background:#323232;border-top:1px solid #2a2a2a"></div>
<div class="a" style="left:202px;top:535px;width:1px;height:34px;background:#2a2a2a"></div>
<svg style="left:53px;top:546px" width="12" height="13" viewBox="0 0 12 13"><path d="M6 0.5 L11.5 3.3 L6 6.1 L0.5 3.3Z" fill="#c4c4c4"/><path d="M0.5 6 L6 8.8 L11.5 6 M0.5 9 L6 11.8 L11.5 9" fill="none" stroke="#c4c4c4" stroke-width="1.3"/></svg>
<svg style="left:129px;top:548px" width="13" height="9" viewBox="0 0 13 9"><rect x="0.5" y="0.5" width="8" height="8" rx="1" fill="#c4c4c4"/><path d="M8.5 4.5 L12.5 1 V8Z" fill="#c4c4c4"/></svg>
<svg style="left:153px;top:547px" width="11" height="11" viewBox="0 0 11 11"><rect x="3.5" y="0.5" width="4" height="3" fill="#c4c4c4"/><path d="M5.5 3.5 V5.5 M1.5 7.5 V5.5 H9.5 V7.5" fill="none" stroke="#c4c4c4" stroke-width="1"/><rect x="0" y="7.5" width="3" height="3" fill="#c4c4c4"/><rect x="4" y="7.5" width="3" height="3" fill="#c4c4c4"/><rect x="8" y="7.5" width="3" height="3" fill="#c4c4c4"/></svg>
<svg style="left:176px;top:547px" width="12" height="11" viewBox="0 0 12 11"><path d="M0.6 0 V10.4 H11.5" fill="none" stroke="#c4c4c4" stroke-width="1"/><path d="M3 8 L9 3 M6.5 3 H9.2 V5.7" fill="none" stroke="#c4c4c4" stroke-width="1"/></svg>
<div class="a" style="left:222px;top:546px;font-size:11px;color:#8c8c8c;white-space:nowrap">30.00</div>
<div class="a" style="left:251px;top:545px;font-size:6.5px;color:#8c8c8c;white-space:nowrap">FPS</div>
<div class="a" style="left:280px;top:546px;font-size:11px;font-weight:bold;color:#e6e6e6">9</div>
<div class="a" style="left:290px;top:546px;font-size:6px;color:#c8c8c8">F</div>
<svg style="left:451px;top:548px" width="5" height="9" viewBox="0 0 5 9"><path d="M4.2 0.7 L1 4.5 L4.2 8.3" fill="none" stroke="#c4c4c4" stroke-width="1.3"/></svg>
<svg style="left:473px;top:547px" width="13" height="12" viewBox="0 0 13 12"><rect x="0.5" y="0.5" width="10" height="9" fill="#c4c4c4"/><circle cx="5.5" cy="5.7" r="2" fill="#323232"/><circle cx="5.5" cy="5.7" r="1" fill="#c4c4c4"/><path d="M11 11 L12.5 9.5" stroke="#c4c4c4" stroke-width="0.8"/></svg>
<svg style="left:502px;top:548px" width="5" height="9" viewBox="0 0 5 9"><path d="M0.8 0.7 L4 4.5 L0.8 8.3" fill="none" stroke="#c4c4c4" stroke-width="1.3"/></svg>
<div class="a" style="left:519px;top:541px;width:1px;height:24px;background:#262626"></div>
<div class="a" style="left:523px;top:541px;width:23px;height:23px;background:#464646;border-radius:2px"></div>
<svg style="left:528px;top:547px" width="14" height="12" viewBox="0 0 14 12"><circle cx="4.5" cy="5.5" r="4" fill="#8a8a8a"/><circle cx="8" cy="5.5" r="4" fill="#f0f0f0"/><path d="M12 11.5 L13.5 10" stroke="#c4c4c4" stroke-width="0.8"/></svg>
<svg style="left:553px;top:547px" width="14" height="12" viewBox="0 0 14 12"><rect x="0.5" y="1" width="3" height="9" fill="#9a9a9a"/><rect x="4.5" y="1" width="3" height="9" fill="#c4c4c4"/><rect x="8.5" y="1" width="3" height="9" fill="#c4c4c4"/><rect x="5.3" y="6" width="1.4" height="2" fill="#323232"/><path d="M12.5 11.5 L13.8 10" stroke="#c4c4c4" stroke-width="0.8"/></svg>
<svg style="left:578px;top:547px" width="14" height="12" viewBox="0 0 14 12"><rect x="0.5" y="4" width="7" height="6" fill="#5a5a5a"/><rect x="4.5" y="1" width="7" height="6" fill="none" stroke="#5a5a5a" stroke-width="1"/></svg>
<svg style="left:603px;top:548px" width="12" height="10" viewBox="0 0 12 10"><rect x="0.5" y="0.5" width="11" height="8" fill="#c4c4c4"/><rect x="3" y="4" width="6" height="5" fill="#323232"/><rect x="4.5" y="5" width="3" height="4" fill="#c4c4c4"/></svg>
<div class="a" style="left:624px;top:541px;width:1px;height:24px;background:#262626"></div>
<div class="a" style="left:628px;top:541px;width:23px;height:23px;background:#464646;border-radius:2px"></div>
<svg style="left:633px;top:546px" width="14" height="12" viewBox="0 0 14 12"><path d="M9 3 H1 V11 H13 V5" fill="none" stroke="#f0f0f0" stroke-width="1.6"/><path d="M8 0.5 L11.5 3 L8 5.5Z" fill="#f0f0f0"/><path d="M4 7.5 H9" stroke="#f0f0f0" stroke-width="1.3"/></svg>
<svg style="left:661px;top:548px" width="11" height="10" viewBox="0 0 11 10"><path d="M7.5 0.5 L0.5 5 L7.5 9.5Z" fill="#c4c4c4"/><rect x="8.6" y="0.5" width="2" height="9" fill="#c4c4c4"/></svg>
<svg style="left:686px;top:548px" width="10" height="10" viewBox="0 0 10 10"><path d="M0.5 0.5 L9.5 5 L0.5 9.5Z" fill="#c4c4c4"/></svg>
<svg style="left:711px;top:548px" width="11" height="10" viewBox="0 0 11 10"><rect x="0.4" y="0.5" width="2" height="9" fill="#c4c4c4"/><path d="M3.5 0.5 L10.5 5 L3.5 9.5Z" fill="#c4c4c4"/></svg>
<svg style="left:848px;top:547px" width="14" height="11" viewBox="0 0 14 11"><path d="M1 10 H12 M3 5 C3 2 11 1.5 11 6" fill="none" stroke="#c4c4c4" stroke-width="1.3"/><path d="M0.5 5 L3 2.5 L5.5 5Z" fill="#c4c4c4"/></svg>
<div class="a" style="left:869px;top:552px;width:8px;height:2px;background:#c4c4c4"></div>
<div class="a" style="left:881px;top:548px;width:10px;height:10px;border:1.5px solid #c8c8c8;border-radius:50%"></div>
<div class="a" style="left:892px;top:552.5px;width:43px;height:1px;background:#555"></div>
<svg style="left:941px;top:546px" width="16" height="10" viewBox="0 0 16 10"><path d="M0.5 9.5 L4 5 L6.5 9.5Z M4.5 9.5 L10 1.5 L15.5 9.5Z" fill="#c4c4c4"/></svg>
<div class="a" style="left:38px;top:569px;width:165px;height:31px;background:#323232;border-top:1px solid #2a2a2a"></div>
<svg style="left:52px;top:579px" width="12" height="11" viewBox="0 0 12 11"><rect x="0.6" y="0.6" width="10.8" height="9.8" fill="none" stroke="#bdbdbd" stroke-width="1"/><path d="M6 2.5 V8.5 M3 5.5 H9" stroke="#bdbdbd" stroke-width="1"/></svg>
<svg style="left:76px;top:579px" width="13" height="11" viewBox="0 0 13 11"><path d="M0.5 1 H5 L6.5 2.5 H12.5 V10.5 H0.5Z" fill="#c4c4c4"/><path d="M0.5 3.5 H12.5" stroke="#323232" stroke-width="0.7"/></svg>
<svg style="left:99px;top:578px" width="11" height="12" viewBox="0 0 11 12"><path d="M0.5 2 H10.5 M3.5 2 V0.6 H7.5 V2" fill="none" stroke="#c4c4c4" stroke-width="1"/><path d="M1.5 3 H9.5 L8.8 11.5 H2.2Z" fill="#c4c4c4"/><path d="M4 4.5 V10 M5.5 4.5 V10 M7 4.5 V10" stroke="#323232" stroke-width="0.6"/></svg>
<div class="a" style="left:127.5px;top:583.5px;width:3px;height:3px;border-radius:50%;background:#c4c4c4"></div>
<div class="a" style="left:143px;top:578px;width:6px;height:13px;border:1.2px solid #bdbdbd;border-radius:1px"></div>
<svg style="left:157px;top:578px" width="14" height="12" viewBox="0 0 14 12"><path d="M0.8 6 C3 2.5 11 2.5 13.2 6 C11 9.5 3 9.5 0.8 6Z" fill="none" stroke="#bdbdbd" stroke-width="1.1"/><circle cx="7" cy="6" r="1.8" fill="#bdbdbd"/><path d="M2 0.8 L12.5 11.5" stroke="#bdbdbd" stroke-width="1"/></svg>
<svg style="left:179px;top:577px" width="10" height="13" viewBox="0 0 10 13"><path d="M2.3 5.5 V3.8 C2.3 0.8 7.7 0.8 7.7 3.8 V5.5" fill="none" stroke="#c4c4c4" stroke-width="1.3"/><rect x="0.5" y="5.5" width="9" height="7" rx="0.8" fill="#c4c4c4"/><rect x="4.4" y="7.5" width="1.2" height="2.5" fill="#323232"/></svg>
<div class="a" style="left:38px;top:600px;width:165px;height:13px;background:#3a6aa0"></div>
<div class="a" style="left:38px;top:614px;width:165px;height:11px;overflow:hidden;background:#2d5a56"></div>
<svg style="left:59px;top:602px" width="9" height="9" viewBox="0 0 9 9"><path d="M0.5 0.5 H8.5 V5.5 L5.5 8.5 H0.5Z" fill="none" stroke="#d0d0d0" stroke-width="0.9"/><path d="M5.5 8.5 V5.5 H8.5" fill="none" stroke="#d0d0d0" stroke-width="0.8"/></svg>
<svg style="left:59px;top:616px" width="9" height="9" viewBox="0 0 9 9"><path d="M0.5 0.5 H8.5 V5.5 L5.5 8.5 H0.5Z" fill="none" stroke="#d0d0d0" stroke-width="0.9"/><path d="M5.5 8.5 V5.5 H8.5" fill="none" stroke="#d0d0d0" stroke-width="0.8"/></svg>
<div class="a" style="left:76px;top:602px;font-size:8.5px;color:#f0f0f0;white-space:nowrap">Layer_2</div>
<div class="a" style="left:38px;top:614px;width:165px;height:10px;overflow:hidden"><div class="a" style="left:38px;top:2px;font-size:8.5px;color:#f0f0f0;white-space:nowrap">Layer_1</div></div>
<div class="a" style="left:144px;top:602px;width:4px;height:9px;background:#a030d0"></div>
<div class="a" style="left:144px;top:616px;width:4px;height:8px;background:#00e8f0"></div>
<div class="a" style="left:128px;top:619px;width:3.5px;height:3.5px;border-radius:50%;background:#00e0f0"></div>
<svg style="left:160px;top:616px" width="11" height="8" viewBox="0 0 11 8"><path d="M0.6 4 C2.5 1.5 8.5 1.5 10.4 4 C8.5 6.5 2.5 6.5 0.6 4Z" fill="none" stroke="#bdbdbd" stroke-width="0.9"/><circle cx="5.5" cy="4" r="1.3" fill="#bdbdbd"/><path d="M1.5 0.3 L9.5 7.7" stroke="#bdbdbd" stroke-width="0.8"/></svg>
<svg style="left:180px;top:614px" width="8" height="10" viewBox="0 0 8 10"><path d="M1.8 4.5 V3 C1.8 0.6 6.2 0.6 6.2 3 V4.5" fill="none" stroke="#c4c4c4" stroke-width="1.1"/><rect x="0.5" y="4.5" width="7" height="5.5" fill="#c4c4c4"/></svg>
<div class="a" style="left:38px;top:624px;width:933px;height:12px;background:#2e2e2e"></div>
<div class="a" style="left:202px;top:569px;width:769px;height:55px;background:#2e2e2e;border-top:1px solid #2a2a2a"></div>
<div class="a" style="left:202px;top:570px;width:768px;height:10.5px;background:#2a2a2a"></div>
<div class="a" style="left:225.0px;top:570px;width:1px;height:10.5px;background:#3a3a3a"></div>
<div class="a" style="left:254.2px;top:570px;width:1px;height:10.5px;background:#3a3a3a"></div>
<div class="a" style="left:283.5px;top:570px;width:1px;height:10.5px;background:#3a3a3a"></div>
<div class="a" style="left:312.8px;top:570px;width:1px;height:10.5px;background:#3a3a3a"></div>
<div class="a" style="left:342.0px;top:570px;width:1px;height:10.5px;background:#3a3a3a"></div>
<div class="a" style="left:371.2px;top:570px;width:1px;height:10.5px;background:#3a3a3a"></div>
<div class="a" style="left:400.5px;top:570px;width:1px;height:10.5px;background:#3a3a3a"></div>
<div class="a" style="left:429.8px;top:570px;width:1px;height:10.5px;background:#3a3a3a"></div>
<div class="a" style="left:459.0px;top:570px;width:1px;height:10.5px;background:#3a3a3a"></div>
<div class="a" style="left:488.2px;top:570px;width:1px;height:10.5px;background:#3a3a3a"></div>
<div class="a" style="left:517.5px;top:570px;width:1px;height:10.5px;background:#3a3a3a"></div>
<div class="a" style="left:546.8px;top:570px;width:1px;height:10.5px;background:#3a3a3a"></div>
<div class="a" style="left:576.0px;top:570px;width:1px;height:10.5px;background:#3a3a3a"></div>
<div class="a" style="left:605.2px;top:570px;width:1px;height:10.5px;background:#3a3a3a"></div>
<div class="a" style="left:634.5px;top:570px;width:1px;height:10.5px;background:#3a3a3a"></div>
<div class="a" style="left:663.8px;top:570px;width:1px;height:10.5px;background:#3a3a3a"></div>
<div class="a" style="left:693.0px;top:570px;width:1px;height:10.5px;background:#3a3a3a"></div>
<div class="a" style="left:722.2px;top:570px;width:1px;height:10.5px;background:#3a3a3a"></div>
<div class="a" style="left:751.5px;top:570px;width:1px;height:10.5px;background:#3a3a3a"></div>
<div class="a" style="left:780.8px;top:570px;width:1px;height:10.5px;background:#3a3a3a"></div>
<div class="a" style="left:810.0px;top:570px;width:1px;height:10.5px;background:#3a3a3a"></div>
<div class="a" style="left:839.2px;top:570px;width:1px;height:10.5px;background:#3a3a3a"></div>
<div class="a" style="left:868.5px;top:570px;width:1px;height:10.5px;background:#3a3a3a"></div>
<div class="a" style="left:897.8px;top:570px;width:1px;height:10.5px;background:#3a3a3a"></div>
<div class="a" style="left:927.0px;top:570px;width:1px;height:10.5px;background:#3a3a3a"></div>
<div class="a" style="left:956.2px;top:570px;width:1px;height:10.5px;background:#3a3a3a"></div>
<div class="a" style="left:202.5px;top:570px;width:244.8px;height:10.5px;background:#2e64a6"></div>
<div class="a" style="left:230.8px;top:570px;width:1px;height:10.5px;background:#2a5b98"></div>
<div class="a" style="left:260.1px;top:570px;width:1px;height:10.5px;background:#2a5b98"></div>
<div class="a" style="left:289.4px;top:570px;width:1px;height:10.5px;background:#2a5b98"></div>
<div class="a" style="left:318.6px;top:570px;width:1px;height:10.5px;background:#2a5b98"></div>
<div class="a" style="left:347.9px;top:570px;width:1px;height:10.5px;background:#2a5b98"></div>
<div class="a" style="left:377.1px;top:570px;width:1px;height:10.5px;background:#2a5b98"></div>
<div class="a" style="left:406.4px;top:570px;width:1px;height:10.5px;background:#2a5b98"></div>
<div class="a" style="left:435.6px;top:570px;width:1px;height:10.5px;background:#2a5b98"></div>
<div class="a" style="left:202.5px;top:570px;width:1.5px;height:10.5px;background:#5aa8ff"></div>
<svg style="left:204px;top:572px" width="7" height="7" viewBox="0 0 7 7"><path d="M0 3.5 L6.5 0.3 V6.7Z" fill="#5aa8ff"/></svg>
<div class="a" style="left:446px;top:570px;width:1.5px;height:10.5px;background:#5aa8ff"></div>
<svg style="left:439px;top:572px" width="7" height="7" viewBox="0 0 7 7"><path d="M7 3.5 L0.5 0.3 V6.7Z" fill="#5aa8ff"/></svg>
<div class="a" style="left:202px;top:581px;width:768px;height:18px;background:#303030"></div>
<div class="a" style="left:201.6px;top:581px;width:1px;height:6px;background:#3c3c3c"></div><div class="a" style="left:207.4px;top:581px;width:1px;height:6px;background:#3c3c3c"></div><div class="a" style="left:213.3px;top:581px;width:1px;height:6px;background:#3c3c3c"></div><div class="a" style="left:219.1px;top:581px;width:1px;height:6px;background:#3c3c3c"></div><div class="a" style="left:225.0px;top:581px;width:1px;height:6px;background:#3c3c3c"></div><div class="a" style="left:230.8px;top:581px;width:1px;height:6px;background:#3c3c3c"></div><div class="a" style="left:236.7px;top:581px;width:1px;height:6px;background:#3c3c3c"></div><div class="a" style="left:242.5px;top:581px;width:1px;height:6px;background:#3c3c3c"></div><div class="a" style="left:248.4px;top:581px;width:1px;height:6px;background:#3c3c3c"></div><div class="a" style="left:254.2px;top:581px;width:1px;height:6px;background:#3c3c3c"></div><div class="a" style="left:260.1px;top:581px;width:1px;height:6px;background:#3c3c3c"></div><div class="a" style="left:265.9px;top:581px;width:1px;height:6px;background:#3c3c3c"></div><div class="a" style="left:271.8px;top:581px;width:1px;height:6px;background:#3c3c3c"></div><div class="a" style="left:277.6px;top:581px;width:1px;height:6px;background:#3c3c3c"></div><div class="a" style="left:283.5px;top:581px;width:1px;height:6px;background:#3c3c3c"></div><div class="a" style="left:289.4px;top:581px;width:1px;height:6px;background:#3c3c3c"></div><div class="a" style="left:295.2px;top:581px;width:1px;height:6px;background:#3c3c3c"></div><div class="a" style="left:301.0px;top:581px;width:1px;height:6px;background:#3c3c3c"></div><div class="a" style="left:306.9px;top:581px;width:1px;height:6px;background:#3c3c3c"></div><div class="a" style="left:312.8px;top:581px;width:1px;height:6px;background:#3c3c3c"></div><div class="a" style="left:318.6px;top:581px;width:1px;height:6px;background:#3c3c3c"></div><div class="a" style="left:324.4px;top:581px;width:1px;height:6px;background:#3c3c3c"></div><div class="a" style="left:330.3px;top:581px;width:1px;height:6px;background:#3c3c3c"></div><div class="a" style="left:336.1px;top:581px;width:1px;height:6px;background:#3c3c3c"></div><div class="a" style="left:342.0px;top:581px;width:1px;height:6px;background:#3c3c3c"></div><div class="a" style="left:347.9px;top:581px;width:1px;height:6px;background:#3c3c3c"></div><div class="a" style="left:353.7px;top:581px;width:1px;height:6px;background:#3c3c3c"></div><div class="a" style="left:359.5px;top:581px;width:1px;height:6px;background:#3c3c3c"></div><div class="a" style="left:365.4px;top:581px;width:1px;height:6px;background:#3c3c3c"></div><div class="a" style="left:371.2px;top:581px;width:1px;height:6px;background:#3c3c3c"></div><div class="a" style="left:377.1px;top:581px;width:1px;height:6px;background:#3c3c3c"></div><div class="a" style="left:382.9px;top:581px;width:1px;height:6px;background:#3c3c3c"></div><div class="a" style="left:388.8px;top:581px;width:1px;height:6px;background:#3c3c3c"></div><div class="a" style="left:394.6px;top:581px;width:1px;height:6px;background:#3c3c3c"></div><div class="a" style="left:400.5px;top:581px;width:1px;height:6px;background:#3c3c3c"></div><div class="a" style="left:406.4px;top:581px;width:1px;height:6px;background:#3c3c3c"></div><div class="a" style="left:412.2px;top:581px;width:1px;height:6px;background:#3c3c3c"></div><div class="a" style="left:418.0px;top:581px;width:1px;height:6px;background:#3c3c3c"></div><div class="a" style="left:423.9px;top:581px;width:1px;height:6px;background:#3c3c3c"></div><div class="a" style="left:429.8px;top:581px;width:1px;height:6px;background:#3c3c3c"></div><div class="a" style="left:435.6px;top:581px;width:1px;height:6px;background:#3c3c3c"></div><div class="a" style="left:441.4px;top:581px;width:1px;height:6px;background:#3c3c3c"></div><div class="a" style="left:447.3px;top:581px;width:1px;height:6px;background:#3c3c3c"></div><div class="a" style="left:453.1px;top:581px;width:1px;height:6px;background:#3c3c3c"></div><div class="a" style="left:459.0px;top:581px;width:1px;height:6px;background:#3c3c3c"></div><div class="a" style="left:464.9px;top:581px;width:1px;height:6px;background:#3c3c3c"></div><div class="a" style="left:470.7px;top:581px;width:1px;height:6px;background:#3c3c3c"></div><div class="a" style="left:476.5px;top:581px;width:1px;height:6px;background:#3c3c3c"></div><div class="a" style="left:482.4px;top:581px;width:1px;height:6px;background:#3c3c3c"></div><div class="a" style="left:488.2px;top:581px;width:1px;height:6px;background:#3c3c3c"></div><div class="a" style="left:494.1px;top:581px;width:1px;height:6px;background:#3c3c3c"></div><div class="a" style="left:499.9px;top:581px;width:1px;height:6px;background:#3c3c3c"></div><div class="a" style="left:505.8px;top:581px;width:1px;height:6px;background:#3c3c3c"></div><div class="a" style="left:511.6px;top:581px;width:1px;height:6px;background:#3c3c3c"></div><div class="a" style="left:517.5px;top:581px;width:1px;height:6px;background:#3c3c3c"></div><div class="a" style="left:523.4px;top:581px;width:1px;height:6px;background:#3c3c3c"></div><div class="a" style="left:529.2px;top:581px;width:1px;height:6px;background:#3c3c3c"></div><div class="a" style="left:535.0px;top:581px;width:1px;height:6px;background:#3c3c3c"></div><div class="a" style="left:540.9px;top:581px;width:1px;height:6px;background:#3c3c3c"></div><div class="a" style="left:546.8px;top:581px;width:1px;height:6px;background:#3c3c3c"></div><div class="a" style="left:552.6px;top:581px;width:1px;height:6px;background:#3c3c3c"></div><div class="a" style="left:558.4px;top:581px;width:1px;height:6px;background:#3c3c3c"></div><div class="a" style="left:564.3px;top:581px;width:1px;height:6px;background:#3c3c3c"></div><div class="a" style="left:570.1px;top:581px;width:1px;height:6px;background:#3c3c3c"></div><div class="a" style="left:576.0px;top:581px;width:1px;height:6px;background:#3c3c3c"></div><div class="a" style="left:581.9px;top:581px;width:1px;height:6px;background:#3c3c3c"></div><div class="a" style="left:587.7px;top:581px;width:1px;height:6px;background:#3c3c3c"></div><div class="a" style="left:593.5px;top:581px;width:1px;height:6px;background:#3c3c3c"></div><div class="a" style="left:599.4px;top:581px;width:1px;height:6px;background:#3c3c3c"></div><div class="a" style="left:605.2px;top:581px;width:1px;height:6px;background:#3c3c3c"></div><div class="a" style="left:611.1px;top:581px;width:1px;height:6px;background:#3c3c3c"></div><div class="a" style="left:616.9px;top:581px;width:1px;height:6px;background:#3c3c3c"></div><div class="a" style="left:622.8px;top:581px;width:1px;height:6px;background:#3c3c3c"></div><div class="a" style="left:628.6px;top:581px;width:1px;height:6px;background:#3c3c3c"></div><div class="a" style="left:634.5px;top:581px;width:1px;height:6px;background:#3c3c3c"></div><div class="a" style="left:640.4px;top:581px;width:1px;height:6px;background:#3c3c3c"></div><div class="a" style="left:646.2px;top:581px;width:1px;height:6px;background:#3c3c3c"></div><div class="a" style="left:652.0px;top:581px;width:1px;height:6px;background:#3c3c3c"></div><div class="a" style="left:657.9px;top:581px;width:1px;height:6px;background:#3c3c3c"></div><div class="a" style="left:663.8px;top:581px;width:1px;height:6px;background:#3c3c3c"></div><div class="a" style="left:669.6px;top:581px;width:1px;height:6px;background:#3c3c3c"></div><div class="a" style="left:675.4px;top:581px;width:1px;height:6px;background:#3c3c3c"></div><div class="a" style="left:681.3px;top:581px;width:1px;height:6px;background:#3c3c3c"></div><div class="a" style="left:687.1px;top:581px;width:1px;height:6px;background:#3c3c3c"></div><div class="a" style="left:693.0px;top:581px;width:1px;height:6px;background:#3c3c3c"></div><div class="a" style="left:698.8px;top:581px;width:1px;height:6px;background:#3c3c3c"></div><div class="a" style="left:704.7px;top:581px;width:1px;height:6px;background:#3c3c3c"></div><div class="a" style="left:710.5px;top:581px;width:1px;height:6px;background:#3c3c3c"></div><div class="a" style="left:716.4px;top:581px;width:1px;height:6px;background:#3c3c3c"></div><div class="a" style="left:722.2px;top:581px;width:1px;height:6px;background:#3c3c3c"></div><div class="a" style="left:728.1px;top:581px;width:1px;height:6px;background:#3c3c3c"></div><div class="a" style="left:734.0px;top:581px;width:1px;height:6px;background:#3c3c3c"></div><div class="a" style="left:739.8px;top:581px;width:1px;height:6px;background:#3c3c3c"></div><div class="a" style="left:745.6px;top:581px;width:1px;height:6px;background:#3c3c3c"></div><div class="a" style="left:751.5px;top:581px;width:1px;height:6px;background:#3c3c3c"></div><div class="a" style="left:757.4px;top:581px;width:1px;height:6px;background:#3c3c3c"></div><div class="a" style="left:763.2px;top:581px;width:1px;height:6px;background:#3c3c3c"></div><div class="a" style="left:769.0px;top:581px;width:1px;height:6px;background:#3c3c3c"></div><div class="a" style="left:774.9px;top:581px;width:1px;height:6px;background:#3c3c3c"></div><div class="a" style="left:780.8px;top:581px;width:1px;height:6px;background:#3c3c3c"></div><div class="a" style="left:786.6px;top:581px;width:1px;height:6px;background:#3c3c3c"></div><div class="a" style="left:792.4px;top:581px;width:1px;height:6px;background:#3c3c3c"></div><div class="a" style="left:798.3px;top:581px;width:1px;height:6px;background:#3c3c3c"></div><div class="a" style="left:804.1px;top:581px;width:1px;height:6px;background:#3c3c3c"></div><div class="a" style="left:810.0px;top:581px;width:1px;height:6px;background:#3c3c3c"></div><div class="a" style="left:815.9px;top:581px;width:1px;height:6px;background:#3c3c3c"></div><div class="a" style="left:821.7px;top:581px;width:1px;height:6px;background:#3c3c3c"></div><div class="a" style="left:827.5px;top:581px;width:1px;height:6px;background:#3c3c3c"></div><div class="a" style="left:833.4px;top:581px;width:1px;height:6px;background:#3c3c3c"></div><div class="a" style="left:839.2px;top:581px;width:1px;height:6px;background:#3c3c3c"></div><div class="a" style="left:845.1px;top:581px;width:1px;height:6px;background:#3c3c3c"></div><div class="a" style="left:850.9px;top:581px;width:1px;height:6px;background:#3c3c3c"></div><div class="a" style="left:856.8px;top:581px;width:1px;height:6px;background:#3c3c3c"></div><div class="a" style="left:862.6px;top:581px;width:1px;height:6px;background:#3c3c3c"></div><div class="a" style="left:868.5px;top:581px;width:1px;height:6px;background:#3c3c3c"></div><div class="a" style="left:874.4px;top:581px;width:1px;height:6px;background:#3c3c3c"></div><div class="a" style="left:880.2px;top:581px;width:1px;height:6px;background:#3c3c3c"></div><div class="a" style="left:886.0px;top:581px;width:1px;height:6px;background:#3c3c3c"></div><div class="a" style="left:891.9px;top:581px;width:1px;height:6px;background:#3c3c3c"></div><div class="a" style="left:897.8px;top:581px;width:1px;height:6px;background:#3c3c3c"></div><div class="a" style="left:903.6px;top:581px;width:1px;height:6px;background:#3c3c3c"></div><div class="a" style="left:909.4px;top:581px;width:1px;height:6px;background:#3c3c3c"></div><div class="a" style="left:915.3px;top:581px;width:1px;height:6px;background:#3c3c3c"></div><div class="a" style="left:921.1px;top:581px;width:1px;height:6px;background:#3c3c3c"></div><div class="a" style="left:927.0px;top:581px;width:1px;height:6px;background:#3c3c3c"></div><div class="a" style="left:932.9px;top:581px;width:1px;height:6px;background:#3c3c3c"></div><div class="a" style="left:938.7px;top:581px;width:1px;height:6px;background:#3c3c3c"></div><div class="a" style="left:944.5px;top:581px;width:1px;height:6px;background:#3c3c3c"></div><div class="a" style="left:950.4px;top:581px;width:1px;height:6px;background:#3c3c3c"></div><div class="a" style="left:956.2px;top:581px;width:1px;height:6px;background:#3c3c3c"></div><div class="a" style="left:962.1px;top:581px;width:1px;height:6px;background:#3c3c3c"></div><div class="a" style="left:967.9px;top:581px;width:1px;height:6px;background:#3c3c3c"></div>
<div class="a" style="left:245px;top:581px;width:19px;height:18px;background:#555"></div>
<div class="a" style="left:243px;top:581px;width:2px;height:18px;background:#0018ff"></div>
<div class="a" style="left:264px;top:581px;width:2px;height:18px;background:#10e010"></div>
<div class="a" style="left:230.4px;top:588px;width:20px;margin-left:-10px;text-align:center;font-size:7.5px;color:#9a9a9a">5</div>
<div class="a" style="left:259.7px;top:588px;width:20px;margin-left:-10px;text-align:center;font-size:7.5px;color:#9a9a9a">10</div>
<div class="a" style="left:288.9px;top:588px;width:20px;margin-left:-10px;text-align:center;font-size:7.5px;color:#9a9a9a">15</div>
<div class="a" style="left:318.2px;top:588px;width:20px;margin-left:-10px;text-align:center;font-size:7.5px;color:#9a9a9a">20</div>
<div class="a" style="left:347.4px;top:588px;width:20px;margin-left:-10px;text-align:center;font-size:7.5px;color:#9a9a9a">25</div>
<div class="a" style="left:376.7px;top:588px;width:20px;margin-left:-10px;text-align:center;font-size:7.5px;color:#9a9a9a">30</div>
<div class="a" style="left:405.9px;top:588px;width:20px;margin-left:-10px;text-align:center;font-size:7.5px;color:#9a9a9a">35</div>
<div class="a" style="left:435.2px;top:588px;width:20px;margin-left:-10px;text-align:center;font-size:7.5px;color:#9a9a9a">40</div>
<div class="a" style="left:464.4px;top:588px;width:20px;margin-left:-10px;text-align:center;font-size:7.5px;color:#9a9a9a">45</div>
<div class="a" style="left:493.7px;top:588px;width:20px;margin-left:-10px;text-align:center;font-size:7.5px;color:#9a9a9a">50</div>
<div class="a" style="left:522.9px;top:588px;width:20px;margin-left:-10px;text-align:center;font-size:7.5px;color:#9a9a9a">55</div>
<div class="a" style="left:552.2px;top:588px;width:20px;margin-left:-10px;text-align:center;font-size:7.5px;color:#9a9a9a">60</div>
<div class="a" style="left:581.4px;top:588px;width:20px;margin-left:-10px;text-align:center;font-size:7.5px;color:#9a9a9a">65</div>
<div class="a" style="left:610.7px;top:588px;width:20px;margin-left:-10px;text-align:center;font-size:7.5px;color:#9a9a9a">70</div>
<div class="a" style="left:639.9px;top:588px;width:20px;margin-left:-10px;text-align:center;font-size:7.5px;color:#9a9a9a">75</div>
<div class="a" style="left:669.2px;top:588px;width:20px;margin-left:-10px;text-align:center;font-size:7.5px;color:#9a9a9a">80</div>
<div class="a" style="left:698.4px;top:588px;width:20px;margin-left:-10px;text-align:center;font-size:7.5px;color:#9a9a9a">85</div>
<div class="a" style="left:727.7px;top:588px;width:20px;margin-left:-10px;text-align:center;font-size:7.5px;color:#9a9a9a">90</div>
<div class="a" style="left:756.9px;top:588px;width:20px;margin-left:-10px;text-align:center;font-size:7.5px;color:#9a9a9a">95</div>
<div class="a" style="left:786.2px;top:588px;width:20px;margin-left:-10px;text-align:center;font-size:7.5px;color:#9a9a9a">100</div>
<div class="a" style="left:815.4px;top:588px;width:20px;margin-left:-10px;text-align:center;font-size:7.5px;color:#9a9a9a">105</div>
<div class="a" style="left:844.7px;top:588px;width:20px;margin-left:-10px;text-align:center;font-size:7.5px;color:#9a9a9a">110</div>
<div class="a" style="left:873.9px;top:588px;width:20px;margin-left:-10px;text-align:center;font-size:7.5px;color:#9a9a9a">115</div>
<div class="a" style="left:903.2px;top:588px;width:20px;margin-left:-10px;text-align:center;font-size:7.5px;color:#9a9a9a">120</div>
<div class="a" style="left:932.4px;top:588px;width:20px;margin-left:-10px;text-align:center;font-size:7.5px;color:#9a9a9a">125</div>
<div class="a" style="left:375.2px;top:571px;width:20px;margin-left:-10px;text-align:center;font-size:6.5px;font-style:italic;color:#6a9ad6">1s</div>
<div class="a" style="left:550.7px;top:571px;width:20px;margin-left:-10px;text-align:center;font-size:6.5px;font-style:italic;color:#9a9a9a">2s</div>
<div class="a" style="left:726.2px;top:571px;width:20px;margin-left:-10px;text-align:center;font-size:6.5px;font-style:italic;color:#9a9a9a">3s</div>
<div class="a" style="left:901.7px;top:571px;width:20px;margin-left:-10px;text-align:center;font-size:6.5px;font-style:italic;color:#9a9a9a">4s</div>
<div class="a" style="left:201.60px;top:599.5px;width:5.85px;height:13.5px;background:#b4b4b4;border-left:1px solid #3a3a3a;box-shadow:inset 1px 0 0 #7a7a7a"></div><div class="a" style="left:207.45px;top:599.5px;width:5.85px;height:13.5px;background:#b4b4b4;border-left:1px solid #3a3a3a;box-shadow:inset 1px 0 0 #7a7a7a"></div><div class="a" style="left:213.30px;top:599.5px;width:5.85px;height:13.5px;background:#b4b4b4;border-left:1px solid #3a3a3a;box-shadow:inset 1px 0 0 #7a7a7a"></div><div class="a" style="left:219.15px;top:599.5px;width:5.85px;height:13.5px;background:#b4b4b4;border-left:1px solid #3a3a3a;box-shadow:inset 1px 0 0 #7a7a7a"></div><div class="a" style="left:225.00px;top:599.5px;width:5.85px;height:13.5px;background:#b4b4b4;border-left:1px solid #3a3a3a;box-shadow:inset 1px 0 0 #7a7a7a"></div><div class="a" style="left:230.85px;top:599.5px;width:5.85px;height:13.5px;background:#b4b4b4;border-left:1px solid #3a3a3a;box-shadow:inset 1px 0 0 #7a7a7a"></div><div class="a" style="left:236.70px;top:599.5px;width:5.85px;height:13.5px;background:#b4b4b4;border-left:1px solid #3a3a3a;box-shadow:inset 1px 0 0 #7a7a7a"></div><div class="a" style="left:242.55px;top:599.5px;width:5.85px;height:13.5px;background:#b4b4b4;border-left:1px solid #3a3a3a;box-shadow:inset 1px 0 0 #7a7a7a"></div><div class="a" style="left:248.40px;top:599.5px;width:5.85px;height:13.5px;background:#b4b4b4;border-left:1px solid #3a3a3a;box-shadow:inset 1px 0 0 #7a7a7a"></div><div class="a" style="left:254.25px;top:599.5px;width:5.85px;height:13.5px;background:#b4b4b4;border-left:1px solid #3a3a3a;box-shadow:inset 1px 0 0 #7a7a7a"></div><div class="a" style="left:260.10px;top:599.5px;width:5.85px;height:13.5px;background:#b4b4b4;border-left:1px solid #3a3a3a;box-shadow:inset 1px 0 0 #7a7a7a"></div><div class="a" style="left:265.95px;top:599.5px;width:5.85px;height:13.5px;background:#b4b4b4;border-left:1px solid #3a3a3a;box-shadow:inset 1px 0 0 #7a7a7a"></div><div class="a" style="left:271.80px;top:599.5px;width:5.85px;height:13.5px;background:#b4b4b4;border-left:1px solid #3a3a3a;box-shadow:inset 1px 0 0 #7a7a7a"></div><div class="a" style="left:277.65px;top:599.5px;width:5.85px;height:13.5px;background:#b4b4b4;border-left:1px solid #3a3a3a;box-shadow:inset 1px 0 0 #7a7a7a"></div><div class="a" style="left:283.50px;top:599.5px;width:5.85px;height:13.5px;background:#b4b4b4;border-left:1px solid #3a3a3a;box-shadow:inset 1px 0 0 #7a7a7a"></div><div class="a" style="left:289.35px;top:599.5px;width:5.85px;height:13.5px;background:#b4b4b4;border-left:1px solid #3a3a3a;box-shadow:inset 1px 0 0 #7a7a7a"></div><div class="a" style="left:295.20px;top:599.5px;width:5.85px;height:13.5px;background:#b4b4b4;border-left:1px solid #3a3a3a;box-shadow:inset 1px 0 0 #7a7a7a"></div><div class="a" style="left:301.05px;top:599.5px;width:5.85px;height:13.5px;background:#b4b4b4;border-left:1px solid #3a3a3a;box-shadow:inset 1px 0 0 #7a7a7a"></div><div class="a" style="left:306.90px;top:599.5px;width:5.85px;height:13.5px;background:#b4b4b4;border-left:1px solid #3a3a3a;box-shadow:inset 1px 0 0 #7a7a7a"></div><div class="a" style="left:312.75px;top:599.5px;width:5.85px;height:13.5px;background:#b4b4b4;border-left:1px solid #3a3a3a;box-shadow:inset 1px 0 0 #7a7a7a"></div><div class="a" style="left:318.60px;top:599.5px;width:5.85px;height:13.5px;background:#b4b4b4;border-left:1px solid #3a3a3a;box-shadow:inset 1px 0 0 #7a7a7a"></div><div class="a" style="left:324.45px;top:599.5px;width:5.85px;height:13.5px;background:#b4b4b4;border-left:1px solid #3a3a3a;box-shadow:inset 1px 0 0 #7a7a7a"></div><div class="a" style="left:330.30px;top:599.5px;width:5.85px;height:13.5px;background:#b4b4b4;border-left:1px solid #3a3a3a;box-shadow:inset 1px 0 0 #7a7a7a"></div><div class="a" style="left:336.15px;top:599.5px;width:5.85px;height:13.5px;background:#b4b4b4;border-left:1px solid #3a3a3a;box-shadow:inset 1px 0 0 #7a7a7a"></div><div class="a" style="left:342.00px;top:599.5px;width:5.85px;height:13.5px;background:#b4b4b4;border-left:1px solid #3a3a3a;box-shadow:inset 1px 0 0 #7a7a7a"></div><div class="a" style="left:347.85px;top:599.5px;width:5.85px;height:13.5px;background:#b4b4b4;border-left:1px solid #3a3a3a;box-shadow:inset 1px 0 0 #7a7a7a"></div><div class="a" style="left:353.70px;top:599.5px;width:5.85px;height:13.5px;background:#b4b4b4;border-left:1px solid #3a3a3a;box-shadow:inset 1px 0 0 #7a7a7a"></div><div class="a" style="left:359.55px;top:599.5px;width:5.85px;height:13.5px;background:#b4b4b4;border-left:1px solid #3a3a3a;box-shadow:inset 1px 0 0 #7a7a7a"></div><div class="a" style="left:365.40px;top:599.5px;width:5.85px;height:13.5px;background:#b4b4b4;border-left:1px solid #3a3a3a;box-shadow:inset 1px 0 0 #7a7a7a"></div><div class="a" style="left:371.25px;top:599.5px;width:5.85px;height:13.5px;background:#b4b4b4;border-left:1px solid #3a3a3a;box-shadow:inset 1px 0 0 #7a7a7a"></div><div class="a" style="left:377.10px;top:599.5px;width:5.85px;height:13.5px;background:#b4b4b4;border-left:1px solid #3a3a3a;box-shadow:inset 1px 0 0 #7a7a7a"></div><div class="a" style="left:382.95px;top:599.5px;width:5.85px;height:13.5px;background:#b4b4b4;border-left:1px solid #3a3a3a;box-shadow:inset 1px 0 0 #7a7a7a"></div><div class="a" style="left:388.80px;top:599.5px;width:5.85px;height:13.5px;background:#b4b4b4;border-left:1px solid #3a3a3a;box-shadow:inset 1px 0 0 #7a7a7a"></div><div class="a" style="left:394.65px;top:599.5px;width:5.85px;height:13.5px;background:#b4b4b4;border-left:1px solid #3a3a3a;box-shadow:inset 1px 0 0 #7a7a7a"></div><div class="a" style="left:400.50px;top:599.5px;width:5.85px;height:13.5px;background:#b4b4b4;border-left:1px solid #3a3a3a;box-shadow:inset 1px 0 0 #7a7a7a"></div><div class="a" style="left:406.35px;top:599.5px;width:5.85px;height:13.5px;background:#b4b4b4;border-left:1px solid #3a3a3a;box-shadow:inset 1px 0 0 #7a7a7a"></div><div class="a" style="left:412.20px;top:599.5px;width:5.85px;height:13.5px;background:#b4b4b4;border-left:1px solid #3a3a3a;box-shadow:inset 1px 0 0 #7a7a7a"></div><div class="a" style="left:418.05px;top:599.5px;width:5.85px;height:13.5px;background:#b4b4b4;border-left:1px solid #3a3a3a;box-shadow:inset 1px 0 0 #7a7a7a"></div><div class="a" style="left:423.90px;top:599.5px;width:5.85px;height:13.5px;background:#b4b4b4;border-left:1px solid #3a3a3a;box-shadow:inset 1px 0 0 #7a7a7a"></div><div class="a" style="left:429.75px;top:599.5px;width:5.85px;height:13.5px;background:#b4b4b4;border-left:1px solid #3a3a3a;box-shadow:inset 1px 0 0 #7a7a7a"></div><div class="a" style="left:435.60px;top:599.5px;width:5.85px;height:13.5px;background:#b4b4b4;border-left:1px solid #3a3a3a;box-shadow:inset 1px 0 0 #7a7a7a"></div><div class="a" style="left:441.45px;top:599.5px;width:5.85px;height:13.5px;background:#b4b4b4;border-left:1px solid #3a3a3a;box-shadow:inset 1px 0 0 #7a7a7a"></div><div class="a" style="left:447.30px;top:599.5px;width:5.85px;height:13.5px;background:#2a2a2a;border-left:1px solid #232323"></div><div class="a" style="left:453.15px;top:599.5px;width:5.85px;height:13.5px;background:#2a2a2a;border-left:1px solid #232323"></div><div class="a" style="left:459.00px;top:599.5px;width:5.85px;height:13.5px;background:#383838;border-left:1px solid #232323"></div><div class="a" style="left:464.85px;top:599.5px;width:5.85px;height:13.5px;background:#2a2a2a;border-left:1px solid #232323"></div><div class="a" style="left:470.70px;top:599.5px;width:5.85px;height:13.5px;background:#2a2a2a;border-left:1px solid #232323"></div><div class="a" style="left:476.55px;top:599.5px;width:5.85px;height:13.5px;background:#2a2a2a;border-left:1px solid #232323"></div><div class="a" style="left:482.40px;top:599.5px;width:5.85px;height:13.5px;background:#2a2a2a;border-left:1px solid #232323"></div><div class="a" style="left:488.25px;top:599.5px;width:5.85px;height:13.5px;background:#383838;border-left:1px solid #232323"></div><div class="a" style="left:494.10px;top:599.5px;width:5.85px;height:13.5px;background:#2a2a2a;border-left:1px solid #232323"></div><div class="a" style="left:499.95px;top:599.5px;width:5.85px;height:13.5px;background:#2a2a2a;border-left:1px solid #232323"></div><div class="a" style="left:505.80px;top:599.5px;width:5.85px;height:13.5px;background:#2a2a2a;border-left:1px solid #232323"></div><div class="a" style="left:511.65px;top:599.5px;width:5.85px;height:13.5px;background:#2a2a2a;border-left:1px solid #232323"></div><div class="a" style="left:517.50px;top:599.5px;width:5.85px;height:13.5px;background:#383838;border-left:1px solid #232323"></div><div class="a" style="left:523.35px;top:599.5px;width:5.85px;height:13.5px;background:#2a2a2a;border-left:1px solid #232323"></div><div class="a" style="left:529.20px;top:599.5px;width:5.85px;height:13.5px;background:#2a2a2a;border-left:1px solid #232323"></div><div class="a" style="left:535.05px;top:599.5px;width:5.85px;height:13.5px;background:#2a2a2a;border-left:1px solid #232323"></div><div class="a" style="left:540.90px;top:599.5px;width:5.85px;height:13.5px;background:#2a2a2a;border-left:1px solid #232323"></div><div class="a" style="left:546.75px;top:599.5px;width:5.85px;height:13.5px;background:#383838;border-left:1px solid #232323"></div><div class="a" style="left:552.60px;top:599.5px;width:5.85px;height:13.5px;background:#2a2a2a;border-left:1px solid #232323"></div><div class="a" style="left:558.45px;top:599.5px;width:5.85px;height:13.5px;background:#2a2a2a;border-left:1px solid #232323"></div><div class="a" style="left:564.30px;top:599.5px;width:5.85px;height:13.5px;background:#2a2a2a;border-left:1px solid #232323"></div><div class="a" style="left:570.15px;top:599.5px;width:5.85px;height:13.5px;background:#2a2a2a;border-left:1px solid #232323"></div><div class="a" style="left:576.00px;top:599.5px;width:5.85px;height:13.5px;background:#383838;border-left:1px solid #232323"></div><div class="a" style="left:581.85px;top:599.5px;width:5.85px;height:13.5px;background:#2a2a2a;border-left:1px solid #232323"></div><div class="a" style="left:587.70px;top:599.5px;width:5.85px;height:13.5px;background:#2a2a2a;border-left:1px solid #232323"></div><div class="a" style="left:593.55px;top:599.5px;width:5.85px;height:13.5px;background:#2a2a2a;border-left:1px solid #232323"></div><div class="a" style="left:599.40px;top:599.5px;width:5.85px;height:13.5px;background:#2a2a2a;border-left:1px solid #232323"></div><div class="a" style="left:605.25px;top:599.5px;width:5.85px;height:13.5px;background:#383838;border-left:1px solid #232323"></div><div class="a" style="left:611.10px;top:599.5px;width:5.85px;height:13.5px;background:#2a2a2a;border-left:1px solid #232323"></div><div class="a" style="left:616.95px;top:599.5px;width:5.85px;height:13.5px;background:#2a2a2a;border-left:1px solid #232323"></div><div class="a" style="left:622.80px;top:599.5px;width:5.85px;height:13.5px;background:#2a2a2a;border-left:1px solid #232323"></div><div class="a" style="left:628.65px;top:599.5px;width:5.85px;height:13.5px;background:#2a2a2a;border-left:1px solid #232323"></div><div class="a" style="left:634.50px;top:599.5px;width:5.85px;height:13.5px;background:#383838;border-left:1px solid #232323"></div><div class="a" style="left:640.35px;top:599.5px;width:5.85px;height:13.5px;background:#2a2a2a;border-left:1px solid #232323"></div><div class="a" style="left:646.20px;top:599.5px;width:5.85px;height:13.5px;background:#2a2a2a;border-left:1px solid #232323"></div><div class="a" style="left:652.05px;top:599.5px;width:5.85px;height:13.5px;background:#2a2a2a;border-left:1px solid #232323"></div><div class="a" style="left:657.90px;top:599.5px;width:5.85px;height:13.5px;background:#2a2a2a;border-left:1px solid #232323"></div><div class="a" style="left:663.75px;top:599.5px;width:5.85px;height:13.5px;background:#383838;border-left:1px solid #232323"></div><div class="a" style="left:669.60px;top:599.5px;width:5.85px;height:13.5px;background:#2a2a2a;border-left:1px solid #232323"></div><div class="a" style="left:675.45px;top:599.5px;width:5.85px;height:13.5px;background:#2a2a2a;border-left:1px solid #232323"></div><div class="a" style="left:681.30px;top:599.5px;width:5.85px;height:13.5px;background:#2a2a2a;border-left:1px solid #232323"></div><div class="a" style="left:687.15px;top:599.5px;width:5.85px;height:13.5px;background:#2a2a2a;border-left:1px solid #232323"></div><div class="a" style="left:693.00px;top:599.5px;width:5.85px;height:13.5px;background:#383838;border-left:1px solid #232323"></div><div class="a" style="left:698.85px;top:599.5px;width:5.85px;height:13.5px;background:#2a2a2a;border-left:1px solid #232323"></div><div class="a" style="left:704.70px;top:599.5px;width:5.85px;height:13.5px;background:#2a2a2a;border-left:1px solid #232323"></div><div class="a" style="left:710.55px;top:599.5px;width:5.85px;height:13.5px;background:#2a2a2a;border-left:1px solid #232323"></div><div class="a" style="left:716.40px;top:599.5px;width:5.85px;height:13.5px;background:#2a2a2a;border-left:1px solid #232323"></div><div class="a" style="left:722.25px;top:599.5px;width:5.85px;height:13.5px;background:#383838;border-left:1px solid #232323"></div><div class="a" style="left:728.10px;top:599.5px;width:5.85px;height:13.5px;background:#2a2a2a;border-left:1px solid #232323"></div><div class="a" style="left:733.95px;top:599.5px;width:5.85px;height:13.5px;background:#2a2a2a;border-left:1px solid #232323"></div><div class="a" style="left:739.80px;top:599.5px;width:5.85px;height:13.5px;background:#2a2a2a;border-left:1px solid #232323"></div><div class="a" style="left:745.65px;top:599.5px;width:5.85px;height:13.5px;background:#2a2a2a;border-left:1px solid #232323"></div><div class="a" style="left:751.50px;top:599.5px;width:5.85px;height:13.5px;background:#383838;border-left:1px solid #232323"></div><div class="a" style="left:757.35px;top:599.5px;width:5.85px;height:13.5px;background:#2a2a2a;border-left:1px solid #232323"></div><div class="a" style="left:763.20px;top:599.5px;width:5.85px;height:13.5px;background:#2a2a2a;border-left:1px solid #232323"></div><div class="a" style="left:769.05px;top:599.5px;width:5.85px;height:13.5px;background:#2a2a2a;border-left:1px solid #232323"></div><div class="a" style="left:774.90px;top:599.5px;width:5.85px;height:13.5px;background:#2a2a2a;border-left:1px solid #232323"></div><div class="a" style="left:780.75px;top:599.5px;width:5.85px;height:13.5px;background:#383838;border-left:1px solid #232323"></div><div class="a" style="left:786.60px;top:599.5px;width:5.85px;height:13.5px;background:#2a2a2a;border-left:1px solid #232323"></div><div class="a" style="left:792.45px;top:599.5px;width:5.85px;height:13.5px;background:#2a2a2a;border-left:1px solid #232323"></div><div class="a" style="left:798.30px;top:599.5px;width:5.85px;height:13.5px;background:#2a2a2a;border-left:1px solid #232323"></div><div class="a" style="left:804.15px;top:599.5px;width:5.85px;height:13.5px;background:#2a2a2a;border-left:1px solid #232323"></div><div class="a" style="left:810.00px;top:599.5px;width:5.85px;height:13.5px;background:#383838;border-left:1px solid #232323"></div><div class="a" style="left:815.85px;top:599.5px;width:5.85px;height:13.5px;background:#2a2a2a;border-left:1px solid #232323"></div><div class="a" style="left:821.70px;top:599.5px;width:5.85px;height:13.5px;background:#2a2a2a;border-left:1px solid #232323"></div><div class="a" style="left:827.55px;top:599.5px;width:5.85px;height:13.5px;background:#2a2a2a;border-left:1px solid #232323"></div><div class="a" style="left:833.40px;top:599.5px;width:5.85px;height:13.5px;background:#2a2a2a;border-left:1px solid #232323"></div><div class="a" style="left:839.25px;top:599.5px;width:5.85px;height:13.5px;background:#383838;border-left:1px solid #232323"></div><div class="a" style="left:845.10px;top:599.5px;width:5.85px;height:13.5px;background:#2a2a2a;border-left:1px solid #232323"></div><div class="a" style="left:850.95px;top:599.5px;width:5.85px;height:13.5px;background:#2a2a2a;border-left:1px solid #232323"></div><div class="a" style="left:856.80px;top:599.5px;width:5.85px;height:13.5px;background:#2a2a2a;border-left:1px solid #232323"></div><div class="a" style="left:862.65px;top:599.5px;width:5.85px;height:13.5px;background:#2a2a2a;border-left:1px solid #232323"></div><div class="a" style="left:868.50px;top:599.5px;width:5.85px;height:13.5px;background:#383838;border-left:1px solid #232323"></div><div class="a" style="left:874.35px;top:599.5px;width:5.85px;height:13.5px;background:#2a2a2a;border-left:1px solid #232323"></div><div class="a" style="left:880.20px;top:599.5px;width:5.85px;height:13.5px;background:#2a2a2a;border-left:1px solid #232323"></div><div class="a" style="left:886.05px;top:599.5px;width:5.85px;height:13.5px;background:#2a2a2a;border-left:1px solid #232323"></div><div class="a" style="left:891.90px;top:599.5px;width:5.85px;height:13.5px;background:#2a2a2a;border-left:1px solid #232323"></div><div class="a" style="left:897.75px;top:599.5px;width:5.85px;height:13.5px;background:#383838;border-left:1px solid #232323"></div><div class="a" style="left:903.60px;top:599.5px;width:5.85px;height:13.5px;background:#2a2a2a;border-left:1px solid #232323"></div><div class="a" style="left:909.45px;top:599.5px;width:5.85px;height:13.5px;background:#2a2a2a;border-left:1px solid #232323"></div><div class="a" style="left:915.30px;top:599.5px;width:5.85px;height:13.5px;background:#2a2a2a;border-left:1px solid #232323"></div><div class="a" style="left:921.15px;top:599.5px;width:5.85px;height:13.5px;background:#2a2a2a;border-left:1px solid #232323"></div><div class="a" style="left:927.00px;top:599.5px;width:5.85px;height:13.5px;background:#383838;border-left:1px solid #232323"></div><div class="a" style="left:932.85px;top:599.5px;width:5.85px;height:13.5px;background:#2a2a2a;border-left:1px solid #232323"></div><div class="a" style="left:938.70px;top:599.5px;width:5.85px;height:13.5px;background:#2a2a2a;border-left:1px solid #232323"></div><div class="a" style="left:944.55px;top:599.5px;width:5.85px;height:13.5px;background:#2a2a2a;border-left:1px solid #232323"></div><div class="a" style="left:950.40px;top:599.5px;width:5.85px;height:13.5px;background:#2a2a2a;border-left:1px solid #232323"></div>
<div class="a" style="left:201.60px;top:614.0px;width:5.85px;height:10.0px;background:#b4b4b4;border-left:1px solid #3a3a3a;box-shadow:inset 1px 0 0 #7a7a7a"></div><div class="a" style="left:207.45px;top:614.0px;width:5.85px;height:10.0px;background:#b4b4b4;border-left:1px solid #3a3a3a;box-shadow:inset 1px 0 0 #7a7a7a"></div><div class="a" style="left:213.30px;top:614.0px;width:5.85px;height:10.0px;background:#b4b4b4;border-left:1px solid #3a3a3a;box-shadow:inset 1px 0 0 #7a7a7a"></div><div class="a" style="left:219.15px;top:614.0px;width:5.85px;height:10.0px;background:#b4b4b4;border-left:1px solid #3a3a3a;box-shadow:inset 1px 0 0 #7a7a7a"></div><div class="a" style="left:225.00px;top:614.0px;width:5.85px;height:10.0px;background:#b4b4b4;border-left:1px solid #3a3a3a;box-shadow:inset 1px 0 0 #7a7a7a"></div><div class="a" style="left:230.85px;top:614.0px;width:5.85px;height:10.0px;background:#b4b4b4;border-left:1px solid #3a3a3a;box-shadow:inset 1px 0 0 #7a7a7a"></div><div class="a" style="left:236.70px;top:614.0px;width:5.85px;height:10.0px;background:#b4b4b4;border-left:1px solid #3a3a3a;box-shadow:inset 1px 0 0 #7a7a7a"></div><div class="a" style="left:242.55px;top:614.0px;width:5.85px;height:10.0px;background:#b4b4b4;border-left:1px solid #3a3a3a;box-shadow:inset 1px 0 0 #7a7a7a"></div><div class="a" style="left:248.40px;top:614.0px;width:5.85px;height:10.0px;background:#b4b4b4;border-left:1px solid #3a3a3a;box-shadow:inset 1px 0 0 #7a7a7a"></div><div class="a" style="left:254.25px;top:614.0px;width:5.85px;height:10.0px;background:#b4b4b4;border-left:1px solid #3a3a3a;box-shadow:inset 1px 0 0 #7a7a7a"></div><div class="a" style="left:260.10px;top:614.0px;width:5.85px;height:10.0px;background:#b4b4b4;border-left:1px solid #3a3a3a;box-shadow:inset 1px 0 0 #7a7a7a"></div><div class="a" style="left:265.95px;top:614.0px;width:5.85px;height:10.0px;background:#b4b4b4;border-left:1px solid #3a3a3a;box-shadow:inset 1px 0 0 #7a7a7a"></div><div class="a" style="left:271.80px;top:614.0px;width:5.85px;height:10.0px;background:#b4b4b4;border-left:1px solid #3a3a3a;box-shadow:inset 1px 0 0 #7a7a7a"></div><div class="a" style="left:277.65px;top:614.0px;width:5.85px;height:10.0px;background:#b4b4b4;border-left:1px solid #3a3a3a;box-shadow:inset 1px 0 0 #7a7a7a"></div><div class="a" style="left:283.50px;top:614.0px;width:5.85px;height:10.0px;background:#b4b4b4;border-left:1px solid #3a3a3a;box-shadow:inset 1px 0 0 #7a7a7a"></div><div class="a" style="left:289.35px;top:614.0px;width:5.85px;height:10.0px;background:#b4b4b4;border-left:1px solid #3a3a3a;box-shadow:inset 1px 0 0 #7a7a7a"></div><div class="a" style="left:295.20px;top:614.0px;width:5.85px;height:10.0px;background:#b4b4b4;border-left:1px solid #3a3a3a;box-shadow:inset 1px 0 0 #7a7a7a"></div><div class="a" style="left:301.05px;top:614.0px;width:5.85px;height:10.0px;background:#b4b4b4;border-left:1px solid #3a3a3a;box-shadow:inset 1px 0 0 #7a7a7a"></div><div class="a" style="left:306.90px;top:614.0px;width:5.85px;height:10.0px;background:#b4b4b4;border-left:1px solid #3a3a3a;box-shadow:inset 1px 0 0 #7a7a7a"></div><div class="a" style="left:312.75px;top:614.0px;width:5.85px;height:10.0px;background:#b4b4b4;border-left:1px solid #3a3a3a;box-shadow:inset 1px 0 0 #7a7a7a"></div><div class="a" style="left:318.60px;top:614.0px;width:5.85px;height:10.0px;background:#b4b4b4;border-left:1px solid #3a3a3a;box-shadow:inset 1px 0 0 #7a7a7a"></div><div class="a" style="left:324.45px;top:614.0px;width:5.85px;height:10.0px;background:#b4b4b4;border-left:1px solid #3a3a3a;box-shadow:inset 1px 0 0 #7a7a7a"></div><div class="a" style="left:330.30px;top:614.0px;width:5.85px;height:10.0px;background:#b4b4b4;border-left:1px solid #3a3a3a;box-shadow:inset 1px 0 0 #7a7a7a"></div><div class="a" style="left:336.15px;top:614.0px;width:5.85px;height:10.0px;background:#b4b4b4;border-left:1px solid #3a3a3a;box-shadow:inset 1px 0 0 #7a7a7a"></div><div class="a" style="left:342.00px;top:614.0px;width:5.85px;height:10.0px;background:#b4b4b4;border-left:1px solid #3a3a3a;box-shadow:inset 1px 0 0 #7a7a7a"></div><div class="a" style="left:347.85px;top:614.0px;width:5.85px;height:10.0px;background:#b4b4b4;border-left:1px solid #3a3a3a;box-shadow:inset 1px 0 0 #7a7a7a"></div><div class="a" style="left:353.70px;top:614.0px;width:5.85px;height:10.0px;background:#b4b4b4;border-left:1px solid #3a3a3a;box-shadow:inset 1px 0 0 #7a7a7a"></div><div class="a" style="left:359.55px;top:614.0px;width:5.85px;height:10.0px;background:#b4b4b4;border-left:1px solid #3a3a3a;box-shadow:inset 1px 0 0 #7a7a7a"></div><div class="a" style="left:365.40px;top:614.0px;width:5.85px;height:10.0px;background:#b4b4b4;border-left:1px solid #3a3a3a;box-shadow:inset 1px 0 0 #7a7a7a"></div><div class="a" style="left:371.25px;top:614.0px;width:5.85px;height:10.0px;background:#b4b4b4;border-left:1px solid #3a3a3a;box-shadow:inset 1px 0 0 #7a7a7a"></div><div class="a" style="left:377.10px;top:614.0px;width:5.85px;height:10.0px;background:#b4b4b4;border-left:1px solid #3a3a3a;box-shadow:inset 1px 0 0 #7a7a7a"></div><div class="a" style="left:382.95px;top:614.0px;width:5.85px;height:10.0px;background:#b4b4b4;border-left:1px solid #3a3a3a;box-shadow:inset 1px 0 0 #7a7a7a"></div><div class="a" style="left:388.80px;top:614.0px;width:5.85px;height:10.0px;background:#b4b4b4;border-left:1px solid #3a3a3a;box-shadow:inset 1px 0 0 #7a7a7a"></div><div class="a" style="left:394.65px;top:614.0px;width:5.85px;height:10.0px;background:#b4b4b4;border-left:1px solid #3a3a3a;box-shadow:inset 1px 0 0 #7a7a7a"></div><div class="a" style="left:400.50px;top:614.0px;width:5.85px;height:10.0px;background:#b4b4b4;border-left:1px solid #3a3a3a;box-shadow:inset 1px 0 0 #7a7a7a"></div><div class="a" style="left:406.35px;top:614.0px;width:5.85px;height:10.0px;background:#b4b4b4;border-left:1px solid #3a3a3a;box-shadow:inset 1px 0 0 #7a7a7a"></div><div class="a" style="left:412.20px;top:614.0px;width:5.85px;height:10.0px;background:#b4b4b4;border-left:1px solid #3a3a3a;box-shadow:inset 1px 0 0 #7a7a7a"></div><div class="a" style="left:418.05px;top:614.0px;width:5.85px;height:10.0px;background:#b4b4b4;border-left:1px solid #3a3a3a;box-shadow:inset 1px 0 0 #7a7a7a"></div><div class="a" style="left:423.90px;top:614.0px;width:5.85px;height:10.0px;background:#b4b4b4;border-left:1px solid #3a3a3a;box-shadow:inset 1px 0 0 #7a7a7a"></div><div class="a" style="left:429.75px;top:614.0px;width:5.85px;height:10.0px;background:#b4b4b4;border-left:1px solid #3a3a3a;box-shadow:inset 1px 0 0 #7a7a7a"></div><div class="a" style="left:435.60px;top:614.0px;width:5.85px;height:10.0px;background:#b4b4b4;border-left:1px solid #3a3a3a;box-shadow:inset 1px 0 0 #7a7a7a"></div><div class="a" style="left:441.45px;top:614.0px;width:5.85px;height:10.0px;background:#b4b4b4;border-left:1px solid #3a3a3a;box-shadow:inset 1px 0 0 #7a7a7a"></div><div class="a" style="left:447.30px;top:614.0px;width:5.85px;height:10.0px;background:#2a2a2a;border-left:1px solid #232323"></div><div class="a" style="left:453.15px;top:614.0px;width:5.85px;height:10.0px;background:#2a2a2a;border-left:1px solid #232323"></div><div class="a" style="left:459.00px;top:614.0px;width:5.85px;height:10.0px;background:#383838;border-left:1px solid #232323"></div><div class="a" style="left:464.85px;top:614.0px;width:5.85px;height:10.0px;background:#2a2a2a;border-left:1px solid #232323"></div><div class="a" style="left:470.70px;top:614.0px;width:5.85px;height:10.0px;background:#2a2a2a;border-left:1px solid #232323"></div><div class="a" style="left:476.55px;top:614.0px;width:5.85px;height:10.0px;background:#2a2a2a;border-left:1px solid #232323"></div><div class="a" style="left:482.40px;top:614.0px;width:5.85px;height:10.0px;background:#2a2a2a;border-left:1px solid #232323"></div><div class="a" style="left:488.25px;top:614.0px;width:5.85px;height:10.0px;background:#383838;border-left:1px solid #232323"></div><div class="a" style="left:494.10px;top:614.0px;width:5.85px;height:10.0px;background:#2a2a2a;border-left:1px solid #232323"></div><div class="a" style="left:499.95px;top:614.0px;width:5.85px;height:10.0px;background:#2a2a2a;border-left:1px solid #232323"></div><div class="a" style="left:505.80px;top:614.0px;width:5.85px;height:10.0px;background:#2a2a2a;border-left:1px solid #232323"></div><div class="a" style="left:511.65px;top:614.0px;width:5.85px;height:10.0px;background:#2a2a2a;border-left:1px solid #232323"></div><div class="a" style="left:517.50px;top:614.0px;width:5.85px;height:10.0px;background:#383838;border-left:1px solid #232323"></div><div class="a" style="left:523.35px;top:614.0px;width:5.85px;height:10.0px;background:#2a2a2a;border-left:1px solid #232323"></div><div class="a" style="left:529.20px;top:614.0px;width:5.85px;height:10.0px;background:#2a2a2a;border-left:1px solid #232323"></div><div class="a" style="left:535.05px;top:614.0px;width:5.85px;height:10.0px;background:#2a2a2a;border-left:1px solid #232323"></div><div class="a" style="left:540.90px;top:614.0px;width:5.85px;height:10.0px;background:#2a2a2a;border-left:1px solid #232323"></div><div class="a" style="left:546.75px;top:614.0px;width:5.85px;height:10.0px;background:#383838;border-left:1px solid #232323"></div><div class="a" style="left:552.60px;top:614.0px;width:5.85px;height:10.0px;background:#2a2a2a;border-left:1px solid #232323"></div><div class="a" style="left:558.45px;top:614.0px;width:5.85px;height:10.0px;background:#2a2a2a;border-left:1px solid #232323"></div><div class="a" style="left:564.30px;top:614.0px;width:5.85px;height:10.0px;background:#2a2a2a;border-left:1px solid #232323"></div><div class="a" style="left:570.15px;top:614.0px;width:5.85px;height:10.0px;background:#2a2a2a;border-left:1px solid #232323"></div><div class="a" style="left:576.00px;top:614.0px;width:5.85px;height:10.0px;background:#383838;border-left:1px solid #232323"></div><div class="a" style="left:581.85px;top:614.0px;width:5.85px;height:10.0px;background:#2a2a2a;border-left:1px solid #232323"></div><div class="a" style="left:587.70px;top:614.0px;width:5.85px;height:10.0px;background:#2a2a2a;border-left:1px solid #232323"></div><div class="a" style="left:593.55px;top:614.0px;width:5.85px;height:10.0px;background:#2a2a2a;border-left:1px solid #232323"></div><div class="a" style="left:599.40px;top:614.0px;width:5.85px;height:10.0px;background:#2a2a2a;border-left:1px solid #232323"></div><div class="a" style="left:605.25px;top:614.0px;width:5.85px;height:10.0px;background:#383838;border-left:1px solid #232323"></div><div class="a" style="left:611.10px;top:614.0px;width:5.85px;height:10.0px;background:#2a2a2a;border-left:1px solid #232323"></div><div class="a" style="left:616.95px;top:614.0px;width:5.85px;height:10.0px;background:#2a2a2a;border-left:1px solid #232323"></div><div class="a" style="left:622.80px;top:614.0px;width:5.85px;height:10.0px;background:#2a2a2a;border-left:1px solid #232323"></div><div class="a" style="left:628.65px;top:614.0px;width:5.85px;height:10.0px;background:#2a2a2a;border-left:1px solid #232323"></div><div class="a" style="left:634.50px;top:614.0px;width:5.85px;height:10.0px;background:#383838;border-left:1px solid #232323"></div><div class="a" style="left:640.35px;top:614.0px;width:5.85px;height:10.0px;background:#2a2a2a;border-left:1px solid #232323"></div><div class="a" style="left:646.20px;top:614.0px;width:5.85px;height:10.0px;background:#2a2a2a;border-left:1px solid #232323"></div><div class="a" style="left:652.05px;top:614.0px;width:5.85px;height:10.0px;background:#2a2a2a;border-left:1px solid #232323"></div><div class="a" style="left:657.90px;top:614.0px;width:5.85px;height:10.0px;background:#2a2a2a;border-left:1px solid #232323"></div><div class="a" style="left:663.75px;top:614.0px;width:5.85px;height:10.0px;background:#383838;border-left:1px solid #232323"></div><div class="a" style="left:669.60px;top:614.0px;width:5.85px;height:10.0px;background:#2a2a2a;border-left:1px solid #232323"></div><div class="a" style="left:675.45px;top:614.0px;width:5.85px;height:10.0px;background:#2a2a2a;border-left:1px solid #232323"></div><div class="a" style="left:681.30px;top:614.0px;width:5.85px;height:10.0px;background:#2a2a2a;border-left:1px solid #232323"></div><div class="a" style="left:687.15px;top:614.0px;width:5.85px;height:10.0px;background:#2a2a2a;border-left:1px solid #232323"></div><div class="a" style="left:693.00px;top:614.0px;width:5.85px;height:10.0px;background:#383838;border-left:1px solid #232323"></div><div class="a" style="left:698.85px;top:614.0px;width:5.85px;height:10.0px;background:#2a2a2a;border-left:1px solid #232323"></div><div class="a" style="left:704.70px;top:614.0px;width:5.85px;height:10.0px;background:#2a2a2a;border-left:1px solid #232323"></div><div class="a" style="left:710.55px;top:614.0px;width:5.85px;height:10.0px;background:#2a2a2a;border-left:1px solid #232323"></div><div class="a" style="left:716.40px;top:614.0px;width:5.85px;height:10.0px;background:#2a2a2a;border-left:1px solid #232323"></div><div class="a" style="left:722.25px;top:614.0px;width:5.85px;height:10.0px;background:#383838;border-left:1px solid #232323"></div><div class="a" style="left:728.10px;top:614.0px;width:5.85px;height:10.0px;background:#2a2a2a;border-left:1px solid #232323"></div><div class="a" style="left:733.95px;top:614.0px;width:5.85px;height:10.0px;background:#2a2a2a;border-left:1px solid #232323"></div><div class="a" style="left:739.80px;top:614.0px;width:5.85px;height:10.0px;background:#2a2a2a;border-left:1px solid #232323"></div><div class="a" style="left:745.65px;top:614.0px;width:5.85px;height:10.0px;background:#2a2a2a;border-left:1px solid #232323"></div><div class="a" style="left:751.50px;top:614.0px;width:5.85px;height:10.0px;background:#383838;border-left:1px solid #232323"></div><div class="a" style="left:757.35px;top:614.0px;width:5.85px;height:10.0px;background:#2a2a2a;border-left:1px solid #232323"></div><div class="a" style="left:763.20px;top:614.0px;width:5.85px;height:10.0px;background:#2a2a2a;border-left:1px solid #232323"></div><div class="a" style="left:769.05px;top:614.0px;width:5.85px;height:10.0px;background:#2a2a2a;border-left:1px solid #232323"></div><div class="a" style="left:774.90px;top:614.0px;width:5.85px;height:10.0px;background:#2a2a2a;border-left:1px solid #232323"></div><div class="a" style="left:780.75px;top:614.0px;width:5.85px;height:10.0px;background:#383838;border-left:1px solid #232323"></div><div class="a" style="left:786.60px;top:614.0px;width:5.85px;height:10.0px;background:#2a2a2a;border-left:1px solid #232323"></div><div class="a" style="left:792.45px;top:614.0px;width:5.85px;height:10.0px;background:#2a2a2a;border-left:1px solid #232323"></div><div class="a" style="left:798.30px;top:614.0px;width:5.85px;height:10.0px;background:#2a2a2a;border-left:1px solid #232323"></div><div class="a" style="left:804.15px;top:614.0px;width:5.85px;height:10.0px;background:#2a2a2a;border-left:1px solid #232323"></div><div class="a" style="left:810.00px;top:614.0px;width:5.85px;height:10.0px;background:#383838;border-left:1px solid #232323"></div><div class="a" style="left:815.85px;top:614.0px;width:5.85px;height:10.0px;background:#2a2a2a;border-left:1px solid #232323"></div><div class="a" style="left:821.70px;top:614.0px;width:5.85px;height:10.0px;background:#2a2a2a;border-left:1px solid #232323"></div><div class="a" style="left:827.55px;top:614.0px;width:5.85px;height:10.0px;background:#2a2a2a;border-left:1px solid #232323"></div><div class="a" style="left:833.40px;top:614.0px;width:5.85px;height:10.0px;background:#2a2a2a;border-left:1px solid #232323"></div><div class="a" style="left:839.25px;top:614.0px;width:5.85px;height:10.0px;background:#383838;border-left:1px solid #232323"></div><div class="a" style="left:845.10px;top:614.0px;width:5.85px;height:10.0px;background:#2a2a2a;border-left:1px solid #232323"></div><div class="a" style="left:850.95px;top:614.0px;width:5.85px;height:10.0px;background:#2a2a2a;border-left:1px solid #232323"></div><div class="a" style="left:856.80px;top:614.0px;width:5.85px;height:10.0px;background:#2a2a2a;border-left:1px solid #232323"></div><div class="a" style="left:862.65px;top:614.0px;width:5.85px;height:10.0px;background:#2a2a2a;border-left:1px solid #232323"></div><div class="a" style="left:868.50px;top:614.0px;width:5.85px;height:10.0px;background:#383838;border-left:1px solid #232323"></div><div class="a" style="left:874.35px;top:614.0px;width:5.85px;height:10.0px;background:#2a2a2a;border-left:1px solid #232323"></div><div class="a" style="left:880.20px;top:614.0px;width:5.85px;height:10.0px;background:#2a2a2a;border-left:1px solid #232323"></div><div class="a" style="left:886.05px;top:614.0px;width:5.85px;height:10.0px;background:#2a2a2a;border-left:1px solid #232323"></div><div class="a" style="left:891.90px;top:614.0px;width:5.85px;height:10.0px;background:#2a2a2a;border-left:1px solid #232323"></div><div class="a" style="left:897.75px;top:614.0px;width:5.85px;height:10.0px;background:#383838;border-left:1px solid #232323"></div><div class="a" style="left:903.60px;top:614.0px;width:5.85px;height:10.0px;background:#2a2a2a;border-left:1px solid #232323"></div><div class="a" style="left:909.45px;top:614.0px;width:5.85px;height:10.0px;background:#2a2a2a;border-left:1px solid #232323"></div><div class="a" style="left:915.30px;top:614.0px;width:5.85px;height:10.0px;background:#2a2a2a;border-left:1px solid #232323"></div><div class="a" style="left:921.15px;top:614.0px;width:5.85px;height:10.0px;background:#2a2a2a;border-left:1px solid #232323"></div><div class="a" style="left:927.00px;top:614.0px;width:5.85px;height:10.0px;background:#383838;border-left:1px solid #232323"></div><div class="a" style="left:932.85px;top:614.0px;width:5.85px;height:10.0px;background:#2a2a2a;border-left:1px solid #232323"></div><div class="a" style="left:938.70px;top:614.0px;width:5.85px;height:10.0px;background:#2a2a2a;border-left:1px solid #232323"></div><div class="a" style="left:944.55px;top:614.0px;width:5.85px;height:10.0px;background:#2a2a2a;border-left:1px solid #232323"></div><div class="a" style="left:950.40px;top:614.0px;width:5.85px;height:10.0px;background:#2a2a2a;border-left:1px solid #232323"></div>
<div class="a" style="left:202.60px;top:606px;width:4.4px;height:4.4px;border-radius:50%;background:#1e1e1e"></div><div class="a" style="left:202.60px;top:620px;width:4.4px;height:4.4px;border-radius:50%;background:#1e1e1e"></div><div class="a" style="left:208.45px;top:606px;width:4.4px;height:4.4px;border-radius:50%;background:#1e1e1e"></div><div class="a" style="left:208.45px;top:620px;width:4.4px;height:4.4px;border-radius:50%;background:#1e1e1e"></div><div class="a" style="left:214.30px;top:606px;width:4.4px;height:4.4px;border-radius:50%;background:#1e1e1e"></div><div class="a" style="left:214.30px;top:620px;width:4.4px;height:4.4px;border-radius:50%;background:#1e1e1e"></div><div class="a" style="left:220.15px;top:606px;width:4.4px;height:4.4px;border-radius:50%;background:#1e1e1e"></div><div class="a" style="left:220.15px;top:620px;width:4.4px;height:4.4px;border-radius:50%;background:#1e1e1e"></div><div class="a" style="left:226.00px;top:606px;width:4.4px;height:4.4px;border-radius:50%;background:#1e1e1e"></div><div class="a" style="left:226.00px;top:620px;width:4.4px;height:4.4px;border-radius:50%;background:#1e1e1e"></div><div class="a" style="left:231.85px;top:606px;width:4.4px;height:4.4px;border-radius:50%;background:#1e1e1e"></div><div class="a" style="left:231.85px;top:620px;width:4.4px;height:4.4px;border-radius:50%;background:#1e1e1e"></div><div class="a" style="left:237.70px;top:606px;width:4.4px;height:4.4px;border-radius:50%;background:#1e1e1e"></div><div class="a" style="left:237.70px;top:620px;width:4.4px;height:4.4px;border-radius:50%;background:#1e1e1e"></div><div class="a" style="left:243.55px;top:606px;width:4.4px;height:4.4px;border-radius:50%;background:#1e1e1e"></div><div class="a" style="left:243.55px;top:620px;width:4.4px;height:4.4px;border-radius:50%;background:#1e1e1e"></div><div class="a" style="left:249.40px;top:606px;width:4.4px;height:4.4px;border-radius:50%;background:#1e1e1e"></div><div class="a" style="left:249.40px;top:620px;width:4.4px;height:4.4px;border-radius:50%;background:#1e1e1e"></div><div class="a" style="left:255.25px;top:606px;width:4.4px;height:4.4px;border-radius:50%;background:#1e1e1e"></div><div class="a" style="left:255.25px;top:620px;width:4.4px;height:4.4px;border-radius:50%;background:#1e1e1e"></div><div class="a" style="left:261.10px;top:606px;width:4.4px;height:4.4px;border-radius:50%;background:#1e1e1e"></div><div class="a" style="left:261.10px;top:620px;width:4.4px;height:4.4px;border-radius:50%;background:#1e1e1e"></div><div class="a" style="left:266.95px;top:606px;width:4.4px;height:4.4px;border-radius:50%;background:#1e1e1e"></div><div class="a" style="left:266.95px;top:620px;width:4.4px;height:4.4px;border-radius:50%;background:#1e1e1e"></div><div class="a" style="left:272.80px;top:606px;width:4.4px;height:4.4px;border-radius:50%;background:#1e1e1e"></div><div class="a" style="left:272.80px;top:620px;width:4.4px;height:4.4px;border-radius:50%;background:#1e1e1e"></div><div class="a" style="left:278.65px;top:606px;width:4.4px;height:4.4px;border-radius:50%;background:#1e1e1e"></div><div class="a" style="left:278.65px;top:620px;width:4.4px;height:4.4px;border-radius:50%;background:#1e1e1e"></div><div class="a" style="left:284.50px;top:606px;width:4.4px;height:4.4px;border-radius:50%;background:#1e1e1e"></div><div class="a" style="left:284.50px;top:620px;width:4.4px;height:4.4px;border-radius:50%;background:#1e1e1e"></div><div class="a" style="left:290.35px;top:606px;width:4.4px;height:4.4px;border-radius:50%;background:#1e1e1e"></div><div class="a" style="left:290.35px;top:620px;width:4.4px;height:4.4px;border-radius:50%;background:#1e1e1e"></div><div class="a" style="left:296.20px;top:606px;width:4.4px;height:4.4px;border-radius:50%;background:#1e1e1e"></div><div class="a" style="left:296.20px;top:620px;width:4.4px;height:4.4px;border-radius:50%;background:#1e1e1e"></div><div class="a" style="left:302.05px;top:606px;width:4.4px;height:4.4px;border-radius:50%;background:#1e1e1e"></div><div class="a" style="left:302.05px;top:620px;width:4.4px;height:4.4px;border-radius:50%;background:#1e1e1e"></div><div class="a" style="left:307.90px;top:606px;width:4.4px;height:4.4px;border-radius:50%;background:#1e1e1e"></div><div class="a" style="left:307.90px;top:620px;width:4.4px;height:4.4px;border-radius:50%;background:#1e1e1e"></div><div class="a" style="left:313.75px;top:606px;width:4.4px;height:4.4px;border-radius:50%;background:#1e1e1e"></div><div class="a" style="left:313.75px;top:620px;width:4.4px;height:4.4px;border-radius:50%;background:#1e1e1e"></div><div class="a" style="left:319.60px;top:606px;width:4.4px;height:4.4px;border-radius:50%;background:#1e1e1e"></div><div class="a" style="left:319.60px;top:620px;width:4.4px;height:4.4px;border-radius:50%;background:#1e1e1e"></div><div class="a" style="left:325.45px;top:606px;width:4.4px;height:4.4px;border-radius:50%;background:#1e1e1e"></div><div class="a" style="left:325.45px;top:620px;width:4.4px;height:4.4px;border-radius:50%;background:#1e1e1e"></div><div class="a" style="left:331.30px;top:606px;width:4.4px;height:4.4px;border-radius:50%;background:#1e1e1e"></div><div class="a" style="left:331.30px;top:620px;width:4.4px;height:4.4px;border-radius:50%;background:#1e1e1e"></div><div class="a" style="left:337.15px;top:606px;width:4.4px;height:4.4px;border-radius:50%;background:#1e1e1e"></div><div class="a" style="left:337.15px;top:620px;width:4.4px;height:4.4px;border-radius:50%;background:#1e1e1e"></div><div class="a" style="left:343.00px;top:606px;width:4.4px;height:4.4px;border-radius:50%;background:#1e1e1e"></div><div class="a" style="left:343.00px;top:620px;width:4.4px;height:4.4px;border-radius:50%;background:#1e1e1e"></div><div class="a" style="left:348.85px;top:606px;width:4.4px;height:4.4px;border-radius:50%;background:#1e1e1e"></div><div class="a" style="left:348.85px;top:620px;width:4.4px;height:4.4px;border-radius:50%;background:#1e1e1e"></div><div class="a" style="left:354.70px;top:606px;width:4.4px;height:4.4px;border-radius:50%;background:#1e1e1e"></div><div class="a" style="left:354.70px;top:620px;width:4.4px;height:4.4px;border-radius:50%;background:#1e1e1e"></div><div class="a" style="left:360.55px;top:606px;width:4.4px;height:4.4px;border-radius:50%;background:#1e1e1e"></div><div class="a" style="left:360.55px;top:620px;width:4.4px;height:4.4px;border-radius:50%;background:#1e1e1e"></div><div class="a" style="left:366.40px;top:606px;width:4.4px;height:4.4px;border-radius:50%;background:#1e1e1e"></div><div class="a" style="left:366.40px;top:620px;width:4.4px;height:4.4px;border-radius:50%;background:#1e1e1e"></div><div class="a" style="left:372.25px;top:606px;width:4.4px;height:4.4px;border-radius:50%;background:#1e1e1e"></div><div class="a" style="left:372.25px;top:620px;width:4.4px;height:4.4px;border-radius:50%;background:#1e1e1e"></div><div class="a" style="left:378.10px;top:606px;width:4.4px;height:4.4px;border-radius:50%;background:#1e1e1e"></div><div class="a" style="left:378.10px;top:620px;width:4.4px;height:4.4px;border-radius:50%;background:#1e1e1e"></div><div class="a" style="left:383.95px;top:606px;width:4.4px;height:4.4px;border-radius:50%;background:#1e1e1e"></div><div class="a" style="left:383.95px;top:620px;width:4.4px;height:4.4px;border-radius:50%;background:#1e1e1e"></div><div class="a" style="left:389.80px;top:606px;width:4.4px;height:4.4px;border-radius:50%;background:#1e1e1e"></div><div class="a" style="left:389.80px;top:620px;width:4.4px;height:4.4px;border-radius:50%;background:#1e1e1e"></div><div class="a" style="left:395.65px;top:606px;width:4.4px;height:4.4px;border-radius:50%;background:#1e1e1e"></div><div class="a" style="left:395.65px;top:620px;width:4.4px;height:4.4px;border-radius:50%;background:#1e1e1e"></div><div class="a" style="left:401.50px;top:606px;width:4.4px;height:4.4px;border-radius:50%;background:#1e1e1e"></div><div class="a" style="left:401.50px;top:620px;width:4.4px;height:4.4px;border-radius:50%;background:#1e1e1e"></div><div class="a" style="left:407.35px;top:606px;width:4.4px;height:4.4px;border-radius:50%;background:#1e1e1e"></div><div class="a" style="left:407.35px;top:620px;width:4.4px;height:4.4px;border-radius:50%;background:#1e1e1e"></div><div class="a" style="left:413.20px;top:606px;width:4.4px;height:4.4px;border-radius:50%;background:#1e1e1e"></div><div class="a" style="left:413.20px;top:620px;width:4.4px;height:4.4px;border-radius:50%;background:#1e1e1e"></div><div class="a" style="left:419.05px;top:606px;width:4.4px;height:4.4px;border-radius:50%;background:#1e1e1e"></div><div class="a" style="left:419.05px;top:620px;width:4.4px;height:4.4px;border-radius:50%;background:#1e1e1e"></div><div class="a" style="left:424.90px;top:606px;width:4.4px;height:4.4px;border-radius:50%;background:#1e1e1e"></div><div class="a" style="left:424.90px;top:620px;width:4.4px;height:4.4px;border-radius:50%;background:#1e1e1e"></div><div class="a" style="left:430.75px;top:606px;width:4.4px;height:4.4px;border-radius:50%;background:#1e1e1e"></div><div class="a" style="left:430.75px;top:620px;width:4.4px;height:4.4px;border-radius:50%;background:#1e1e1e"></div><div class="a" style="left:436.60px;top:606px;width:4.4px;height:4.4px;border-radius:50%;background:#1e1e1e"></div><div class="a" style="left:436.60px;top:620px;width:4.4px;height:4.4px;border-radius:50%;background:#1e1e1e"></div><div class="a" style="left:442.45px;top:606px;width:4.4px;height:4.4px;border-radius:50%;background:#1e1e1e"></div><div class="a" style="left:442.45px;top:620px;width:4.4px;height:4.4px;border-radius:50%;background:#1e1e1e"></div>
<div class="a" style="left:202px;top:613px;width:769px;height:1px;background:#2a2a2a"></div>
<div class="a" style="left:38px;top:613px;width:165px;height:1px;background:#2a2a2a"></div>
<div class="a" style="left:249px;top:570px;width:5px;height:29px;background:#4a90e0;border-radius:2px 2px 0 0"></div>
<svg style="left:249px;top:597px" width="5" height="4" viewBox="0 0 5 4"><path d="M0 0 H5 L2.5 3Z" fill="#4a90e0"/></svg>
<div class="a" style="left:251px;top:599px;width:1px;height:25px;background:#4a90e0"></div>
<div class="a" style="left:203px;top:629px;width:144px;height:3px;background:#8a8a8a;border-radius:2px"></div>
<div class="a" style="left:971px;top:522px;width:1px;height:114px;background:#222"></div>
<!-- TASKBAR -->
<div class="a" style="left:0;top:636px;width:1000px;height:30px;background:#1c1c1c"></div>
<div class="a" style="left:0;top:636px;width:35px;height:30px;background:#3a1630"></div>
<svg style="left:11px;top:645px" width="13" height="13" viewBox="0 0 13 13"><path d="M0 1.8 L5.6 1 V6.2 H0Z M6.4 0.9 L13 0 V6.2 H6.4Z M0 6.8 H5.6 V12 L0 11.2Z M6.4 6.8 H13 V13 L6.4 12.1Z" fill="#fff"/></svg>
<div class="a" style="left:35px;top:636px;width:251px;height:30px;background:#f0f0f0"></div>
<svg style="left:43px;top:644px" width="14" height="14" viewBox="0 0 14 14"><circle cx="8.5" cy="5.5" r="4.3" fill="none" stroke="#222" stroke-width="1.2"/><path d="M5.5 8.5 L1 13" stroke="#222" stroke-width="1.4"/></svg>
<div class="a" style="left:64px;top:645px;font-size:11px;color:#333;white-space:nowrap">Type here to search</div>
<svg style="left:298px;top:645px" width="12" height="12" viewBox="0 0 12 12"><circle cx="6" cy="6" r="4.8" fill="none" stroke="#f0f0f0" stroke-width="1.4"/></svg>
<svg style="left:332px;top:645px" width="14" height="12" viewBox="0 0 14 12"><rect x="2.5" y="3" width="8" height="6" fill="none" stroke="#e0e0e0" stroke-width="1.2"/><path d="M0.5 1 H10 M0.5 11 H10 M12.5 0.5 V3 M12.5 4.5 V7.5 M12.5 9 V11.5" stroke="#e0e0e0" stroke-width="1.2"/></svg>
<svg style="left:368px;top:644px" width="16" height="14" viewBox="0 0 16 14"><path d="M0.5 1 H6 L7.5 2.5 H15 V13 H0.5Z" fill="#f0b838"/><rect x="0.5" y="4" width="14.5" height="9" fill="#ffd66a"/><rect x="4" y="7" width="8" height="5" fill="#2a8ad8"/></svg>
<svg style="left:403px;top:642px" width="18" height="17" viewBox="0 0 18 17"><path d="M6 4 C6 0.5 12 0.5 12 4" fill="none" stroke="#f0f0f0" stroke-width="1.2"/><rect x="0.5" y="4" width="17" height="12.5" fill="#f4f4f4"/><rect x="5.5" y="6.5" width="3" height="3" fill="#f25022"/><rect x="9.3" y="6.5" width="3" height="3" fill="#7fba00"/><rect x="5.5" y="10.3" width="3" height="3" fill="#00a4ef"/><rect x="9.3" y="10.3" width="3" height="3" fill="#ffb900"/></svg>
<svg style="left:440px;top:643px" width="16" height="16" viewBox="0 0 16 16"><circle cx="8" cy="8" r="7.8" fill="#db4437"/><path d="M8 8 L15.6 6 A7.8 7.8 0 0 1 4.5 15 Z" fill="#f4c20d"/><path d="M8 8 L4.5 15 A7.8 7.8 0 0 1 1.2 4.2 Z" fill="#0f9d58"/><circle cx="8" cy="8" r="3.6" fill="#fff"/><circle cx="8" cy="8" r="2.8" fill="#4285f4"/></svg>
<svg style="left:475px;top:642px" width="18" height="17" viewBox="0 0 18 17"><ellipse cx="8" cy="6" rx="7.5" ry="4.5" fill="#e8e8e8" transform="rotate(-20 8 6)"/><path d="M3 8 L15 3" stroke="#d03030" stroke-width="1.2"/><circle cx="10.5" cy="12.5" r="2" fill="none" stroke="#2a9ad8" stroke-width="1.3"/><circle cx="15" cy="11" r="2" fill="none" stroke="#2a9ad8" stroke-width="1.3"/><path d="M9 5 L11 11 M12 5 L14 9.5" stroke="#2a9ad8" stroke-width="1.2"/></svg>
<svg style="left:512px;top:643px" width="15" height="15" viewBox="0 0 15 15"><rect x="0" y="0" width="15" height="15" fill="#c8141a"/><path d="M3 11.5 C5 8 7 4 7 2.5 C7 1.5 8 1.5 8 3 C8 6 11 9.5 13 10 C11 9.5 6 10 3 11.5Z" fill="none" stroke="#fff" stroke-width="0.9"/></svg>
<svg style="left:546px;top:642px" width="18" height="18" viewBox="0 0 18 18"><rect x="0" y="0" width="18" height="18" fill="#38a8e0"/><circle cx="8" cy="8" r="3.5" fill="none" stroke="#e0f4ff" stroke-width="1"/><path d="M4 9 H12 V13 H4Z" fill="none" stroke="#e0f4ff" stroke-width="1"/></svg>
<svg style="left:582px;top:642px" width="19" height="17" viewBox="0 0 19 17"><rect x="5" y="0.5" width="13.5" height="16" rx="1" fill="#2b7cd3"/><rect x="5" y="6" width="13.5" height="5" fill="#41a5ee"/><rect x="0" y="3.5" width="10" height="10" fill="#185abd"/><path d="M1.8 5.5 L3.2 11.5 L5 7 L6.8 11.5 L8.2 5.5" fill="none" stroke="#fff" stroke-width="1"/></svg>
<div class="a" style="left:610px;top:637px;width:35px;height:29px;background:#484848"></div>
<div class="a" style="left:610px;top:664px;width:35px;height:2px;background:#76b9ed"></div>
<div class="a" style="left:619px;top:643px;width:17px;height:16px;background:#330000;border:1px solid #ff3b2f"></div>
<div class="a" style="left:621px;top:645px;font-size:10px;color:#ff4a3a;white-space:nowrap">An</div>
<svg style="left:695px;top:647px" width="11" height="7" viewBox="0 0 11 7"><path d="M0.8 6.2 L5.5 1 L10.2 6.2" fill="none" stroke="#e8e8e8" stroke-width="1.2"/></svg>
<svg style="left:716px;top:644px" width="18" height="15" viewBox="0 0 18 15"><path d="M2 9.5 C0 9.5 0 6 2.5 6 C3 2.5 8 2 9 5 C11 4 13 6 12 8.5" fill="#2b88d8"/><circle cx="12.5" cy="10.5" r="3.8" fill="#e81123"/><path d="M11 9 L14 12 M14 9 L11 12" stroke="#fff" stroke-width="1"/></svg>
<svg style="left:740px;top:646px" width="14" height="10" viewBox="0 0 14 10"><path d="M3 9.5 C0.3 9.5 0.3 5.5 3 5.5 C3.5 1.5 9 1 10 4.5 C13.5 4 14 9.5 10.5 9.5Z" fill="#e8e8e8"/></svg>
<svg style="left:763px;top:643px" width="14" height="15" viewBox="0 0 14 15"><rect x="0.6" y="2.5" width="11" height="9" fill="none" stroke="#e8e8e8" stroke-width="1.1"/><path d="M4 5 C5 4 7 4 8 5 M4 8 L8 8" stroke="#e8e8e8" stroke-width="1"/><circle cx="10.5" cy="11.5" r="2.7" fill="#f7941d"/></svg>
<svg style="left:786px;top:647px" width="14" height="8" viewBox="0 0 14 8"><rect x="0.5" y="0.5" width="11.5" height="7" fill="none" stroke="#e8e8e8" stroke-width="1"/><rect x="2" y="2" width="4" height="4" fill="#e8e8e8"/><rect x="12" y="2.5" width="1.5" height="3" fill="#e8e8e8"/></svg>
<svg style="left:811px;top:645px" width="12" height="11" viewBox="0 0 12 11"><path d="M1 10 C1 5 5 1 10 1 M3.5 10 C3.5 6.5 6.5 3.5 10 3.5 M6 10 C6 8 8 6 10 6" fill="none" stroke="#e8e8e8" stroke-width="1"/><path d="M9 9 H12 M10.5 7.5 V10.5" stroke="#e8e8e8" stroke-width="0.8"/></svg>
<svg style="left:833px;top:645px" width="13" height="11" viewBox="0 0 13 11"><path d="M0.6 3.5 H3 L6 0.8 V10.2 L3 7.5 H0.6Z" fill="none" stroke="#e8e8e8" stroke-width="1"/><path d="M8.5 3.5 L12 7 M12 3.5 L8.5 7" stroke="#e8e8e8" stroke-width="1"/></svg>
<svg style="left:859px;top:643px" width="13" height="14" viewBox="0 0 13 14"><path d="M10 1 L12 3 L5 10 L3 8Z M3 8 L1 12 L5 10" fill="none" stroke="#e8e8e8" stroke-width="1"/><path d="M0.5 13 C2 11 4 13 6 11" fill="none" stroke="#e8e8e8" stroke-width="0.9"/></svg>
<div class="a" style="left:885.5px;top:647px;font-size:8.8px;color:#e8e8e8;white-space:nowrap">ENG</div>
<div class="a" style="left:918px;top:640.5px;font-size:8.8px;color:#e8e8e8;white-space:nowrap">2:43 PM</div>
<div class="a" style="left:911.5px;top:653.5px;font-size:8.8px;color:#e8e8e8;white-space:nowrap">23/05/2020</div>
<svg style="left:970px;top:645px" width="22" height="19" viewBox="0 0 22 19"><path d="M0.6 0.6 H12 V9.5 H4 L0.6 12Z" fill="#e8e8e8"/><path d="M2.5 3 H10 M2.5 5.5 H10 M2.5 8 H8" stroke="#1c1c1c" stroke-width="1"/><circle cx="11" cy="11.5" r="5.8" fill="#1c1c1c" stroke="#9a9a9a" stroke-width="0.9"/></svg>
<div class="a" style="left:977px;top:651.5px;font-size:8.5px;color:#f0f0f0;width:8px;text-align:center">6</div>

</body></html>
